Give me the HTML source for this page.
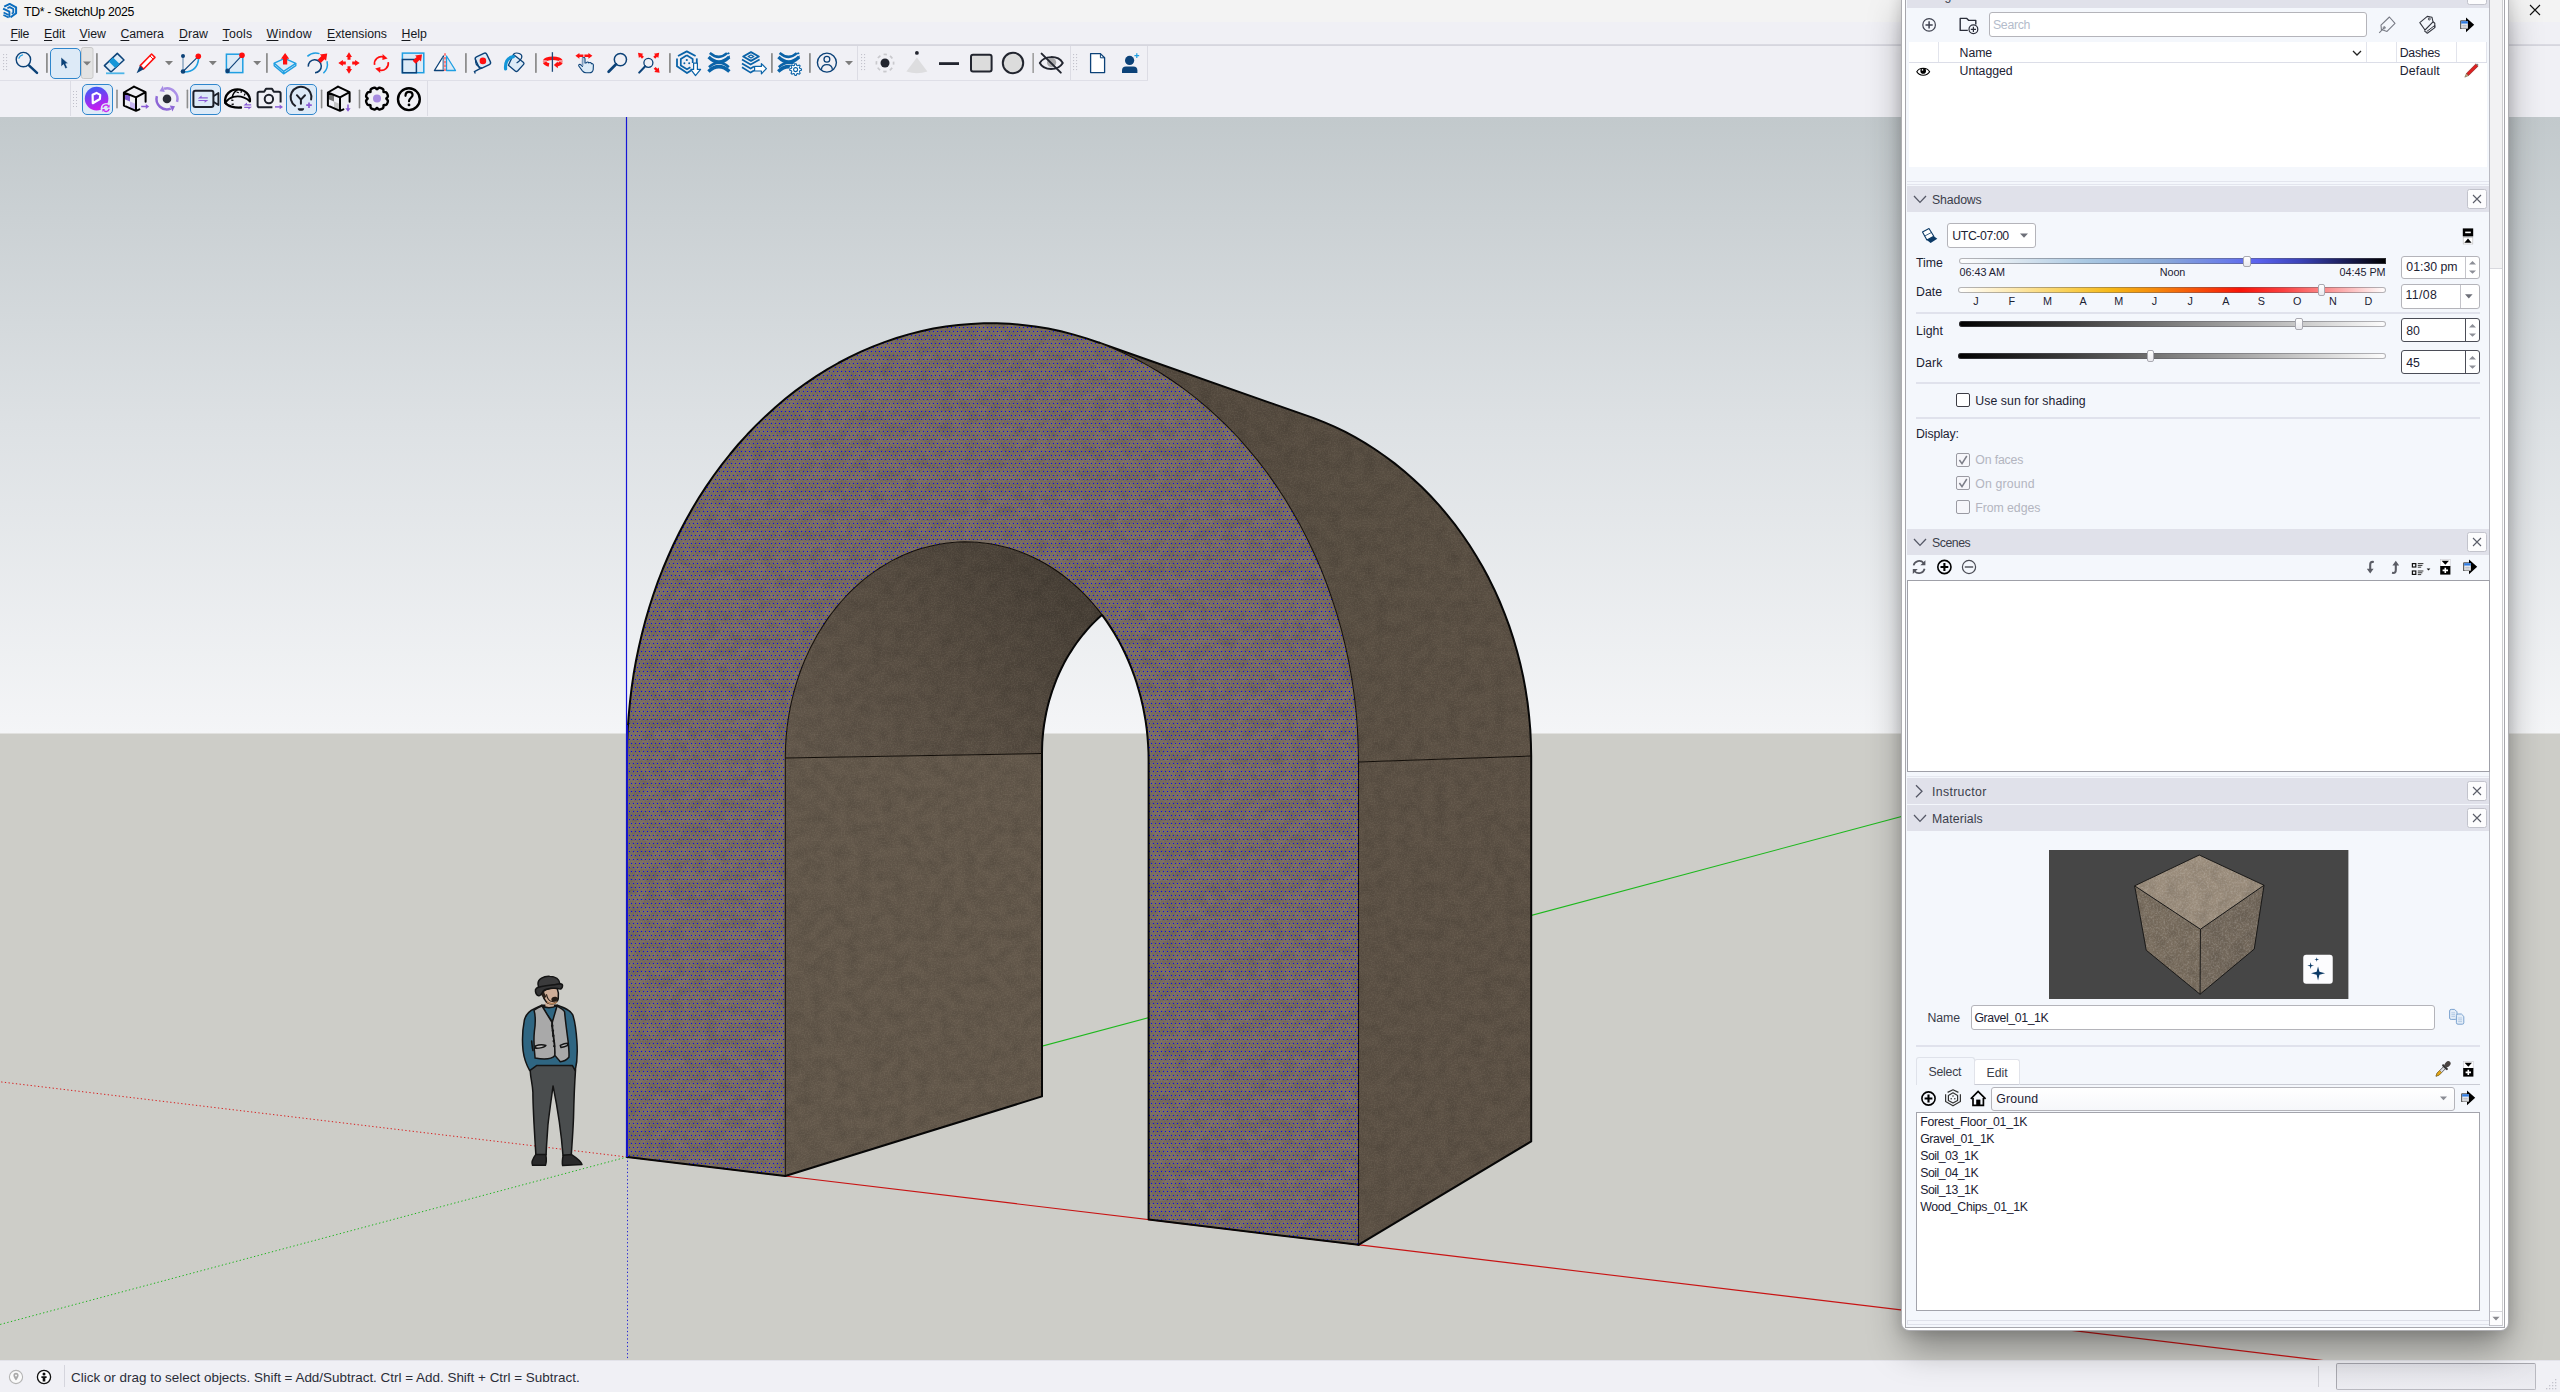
<!DOCTYPE html>
<html lang="en">
<head>
<meta charset="utf-8">
<title>TD* - SketchUp 2025</title>
<style>
*{box-sizing:border-box;margin:0;padding:0}
html,body{width:2560px;height:1392px;overflow:hidden;background:#f0f0f5}
body{font-family:"Liberation Sans",sans-serif;color:#1d2330;position:relative}
.abs,.t,.bx,svg.i{position:absolute}
.t{white-space:pre;line-height:1;display:block}
svg{display:block;overflow:visible}
svg.i{overflow:visible}
#titlebar{position:absolute;left:0;top:0;width:2560px;height:22px;background:#f3f3f3}
#menubar{position:absolute;left:0;top:22px;width:2560px;height:23px;background:#f0f0f5;border-bottom:1px solid #dadae2}
#tools{position:absolute;left:0;top:45px;width:2560px;height:72px;background:#f0f0f5}
#viewport{position:absolute;left:0;top:117px;width:2560px;height:1243px}
#status{position:absolute;left:0;top:1360px;width:2560px;height:32px;background:#f0f0f5}
.sep{position:absolute;width:2px;background:#8e8e8e;border-radius:1px}
.selbtn{position:absolute;background:#ddeaf7;border:1px solid #2f86cc;border-radius:5px}
.tbline{position:absolute;background:#dcdce4}
.grip{position:absolute;width:5px;height:17px;background-image:radial-gradient(circle,#bdbdc8 0.6px,transparent 0.8px);background-size:3px 3px}
/* panel */
#panel{position:absolute;left:1901px;top:-12px;width:608px;height:1343px;background:#fff;border:1px solid rgba(60,60,70,.42);border-radius:8px;box-shadow:0 20px 36px -4px rgba(0,0,0,.38),0 1px 14px 0 rgba(0,0,0,.13)}
#pin{position:absolute;left:1905px;top:-2px;width:600px;height:1330px;border:1px solid #a6a6ac;background:#f4f7fc}
.hdr{position:absolute;left:1907px;width:582px;background:#e0e1ea}
.hdr .cl{position:absolute;right:2px;top:3px;width:20px;height:20px;background:#fcfcfd;border:1px solid #c2c3cc;border-radius:2.5px}
.hl{position:absolute;height:2px;background:#e0e2ec}
.inp{position:absolute;background:#fff;border:1px solid #b4b4ba;border-radius:3px}
.cb{position:absolute;width:14px;height:14px;border:1px solid #3c3c44;border-radius:2px;background:#fff}
.cb.d{border-color:#9a9aa2;background:#f6f6fa}
</style>
</head>
<body>
<div id="titlebar">
<svg class="i" style="left:0px;top:0px" width="20" height="22" viewBox="0 0 20 22" ><g fill="none" stroke="#0b6dbe" stroke-width="2" stroke-linejoin="round" stroke-linecap="butt">
<path d="M4.2,6.6 L9.7,3.9 L16.1,7.3 L16.1,13.2 L10.6,17.3"/>
<path d="M7.4,8.2 L9.7,7.1 L13.3,9 L13.3,12.6 L11.8,13.7" stroke-width="1.8"/>
<path d="M3.1,8.6 L9.4,11.7 L9.4,17.6" stroke-width="1.9"/>
<path d="M3.6,12.4 L8.6,14.9 M3.4,15 L8.6,17.5" stroke-width="1.7"/>
</g></svg>
<span class="t" style="left:24px;top:5.64px;font-size:12.3px;color:#000;letter-spacing:-0.33px;">TD* - SketchUp 2025</span>
<svg class="i" style="left:2528px;top:3px" width="14" height="14" viewBox="0 0 14 14" ><path d="M2,2 L12,12 M12,2 L2,12" stroke="#111" stroke-width="1.1" fill="none"/></svg>
</div>
<div id="menubar">
<span class="t" style="left:10.5px;top:6.44px;font-size:12.3px;color:#16181d;letter-spacing:-0.329px;text-underline-offset:1.5px;text-decoration-thickness:1px;text-decoration-color:#95959c;"><u>F</u>ile</span>
<span class="t" style="left:44px;top:6.44px;font-size:12.3px;color:#16181d;letter-spacing:-0.048px;text-underline-offset:1.5px;text-decoration-thickness:1px;text-decoration-color:#95959c;"><u>E</u>dit</span>
<span class="t" style="left:79.5px;top:6.44px;font-size:12.3px;color:#16181d;letter-spacing:0.014px;text-underline-offset:1.5px;text-decoration-thickness:1px;text-decoration-color:#95959c;"><u>V</u>iew</span>
<span class="t" style="left:120.5px;top:6.44px;font-size:12.3px;color:#16181d;letter-spacing:-0.084px;text-underline-offset:1.5px;text-decoration-thickness:1px;text-decoration-color:#95959c;"><u>C</u>amera</span>
<span class="t" style="left:179px;top:6.44px;font-size:12.3px;color:#16181d;letter-spacing:0.073px;text-underline-offset:1.5px;text-decoration-thickness:1px;text-decoration-color:#95959c;"><u>D</u>raw</span>
<span class="t" style="left:222.5px;top:6.44px;font-size:12.3px;color:#16181d;letter-spacing:0.256px;text-underline-offset:1.5px;text-decoration-thickness:1px;text-decoration-color:#95959c;"><u>T</u>ools</span>
<span class="t" style="left:266.5px;top:6.44px;font-size:12.3px;color:#16181d;letter-spacing:0.291px;text-underline-offset:1.5px;text-decoration-thickness:1px;text-decoration-color:#95959c;"><u>W</u>indow</span>
<span class="t" style="left:327px;top:6.44px;font-size:12.3px;color:#16181d;letter-spacing:-0.017px;text-underline-offset:1.5px;text-decoration-thickness:1px;text-decoration-color:#95959c;"><u>E</u>xtensions</span>
<span class="t" style="left:401.5px;top:6.44px;font-size:12.3px;color:#16181d;letter-spacing:0.050px;text-underline-offset:1.5px;text-decoration-thickness:1px;text-decoration-color:#95959c;"><u>H</u>elp</span>
</div>
<div id="tools"><svg width="2560" height="72" viewBox="0 45 2560 72" style="position:absolute;left:0;top:0"><path d="M0,45.5 H2560" stroke="#d6d6de"/><path d="M0,80.5 H1148" stroke="#dfdfe7"/><rect x="3" y="54" width="1.1" height="1.1" fill="#c3c3cc"/><rect x="6" y="54" width="1.1" height="1.1" fill="#c3c3cc"/><rect x="3" y="57" width="1.1" height="1.1" fill="#c3c3cc"/><rect x="6" y="57" width="1.1" height="1.1" fill="#c3c3cc"/><rect x="3" y="60" width="1.1" height="1.1" fill="#c3c3cc"/><rect x="6" y="60" width="1.1" height="1.1" fill="#c3c3cc"/><rect x="3" y="63" width="1.1" height="1.1" fill="#c3c3cc"/><rect x="6" y="63" width="1.1" height="1.1" fill="#c3c3cc"/><rect x="3" y="66" width="1.1" height="1.1" fill="#c3c3cc"/><rect x="6" y="66" width="1.1" height="1.1" fill="#c3c3cc"/><rect x="3" y="69" width="1.1" height="1.1" fill="#c3c3cc"/><rect x="6" y="69" width="1.1" height="1.1" fill="#c3c3cc"/>
<circle cx="23.4" cy="59.6" r="7.2" fill="none" stroke="#0c4278" stroke-width="1.4"/><path d="M29.2,65.6 L37,72.8" stroke="#0c4278" stroke-width="2.5" stroke-linecap="round"/><path d="M18.9,58.3 A5,5 0 0 1 22.6,54.9" fill="none" stroke="#1f9fe2" stroke-width="1.2" stroke-linecap="round"/>
<rect x="46" y="53" width="1.8" height="20" rx=".8" fill="#8e8e8e"/>
<rect x="50.5" y="48.5" width="30" height="30" rx="4.5" fill="#ddeaf7" stroke="#2f86cc"/>
<path d="M61,57 L61,66.8 L63.5,64.6 L65.3,68.8 L67.5,67.8 L65.7,63.8 L68.4,63.6Z" fill="#0c4278" stroke="#eef4fb" stroke-width=".6"/>
<rect x="81.5" y="47.5" width="11.5" height="31" rx="2" fill="#e3e3e3" stroke="#c9c9c9"/>
<path d="M83,61.4 h8 l-4,4.2Z" fill="#7d7d7d"/>
<rect x="96" y="53" width="1.8" height="20" rx=".8" fill="#8e8e8e"/>
<path d="M117.3,53.4 L124,60 L111,72 L104.4,65.6Z" fill="#dcebf7" stroke="#0c4278" stroke-width="1.5" stroke-linejoin="round"/><path d="M113,57.4 L119.7,64 L115.3,68 L108.7,61.6Z" fill="#1496d8"/><path d="M106,73.3 H124.4" stroke="#4db5e8" stroke-width="1.8"/>
<path d="M151.6,54 L155,57.4 L143.6,69 L140.2,65.6Z" fill="#fff" stroke="#ff0f0f" stroke-width="1.5" stroke-linejoin="round"/><path d="M149.8,55.8 L153.2,59.2" stroke="#ff0f0f" stroke-width="1"/><path d="M140,65.4 L143.8,69.2 L136.6,73.2Z" fill="#0c4278"/>
<path d="M165,61 h8 l-4,4.2Z" fill="#7d7d7d"/>
<path d="M183,56 V71.5" stroke="#5a82a8" stroke-width="1"/><path d="M183,71.5 L198.3,56.3" stroke="#0c4278" stroke-width="1.1"/><path d="M184.6,72 Q197.5,71.5 198.6,58.5" fill="none" stroke="#1f9fe2" stroke-width="1.6"/><circle cx="183" cy="55.9" r="2" fill="#0c4278"/><circle cx="183" cy="71.5" r="2.3" fill="#0c4278"/><circle cx="198.3" cy="56.3" r="2.8" fill="#ff0f0f"/>
<path d="M208.8,61 h8 l-4,4.2Z" fill="#7d7d7d"/>
<rect x="226.4" y="54.2" width="16.4" height="18.4" fill="#dcebf7" stroke="#1f9fe2" stroke-width="1.5"/><path d="M227.6,70.9 L242,55.3" stroke="#0c4278" stroke-width="1.1"/><circle cx="227.6" cy="70.9" r="2.3" fill="#0c4278"/><circle cx="242" cy="55.3" r="2.8" fill="#ff0f0f"/>
<path d="M253.2,61 h8 l-4,4.2Z" fill="#7d7d7d"/>
<rect x="266" y="53" width="1.8" height="20" rx=".8" fill="#8e8e8e"/>
<path d="M274.2,63.2 L284.7,58.3 L295.8,63.4 L283.6,71.4Z" fill="#dcebf7" stroke="#1f9fe2" stroke-width="1.4" stroke-linejoin="round"/><path d="M274.2,63.2 V65.6 L283.6,73.8 L295.8,65.7 V63.4 M283.6,71.4 V73.8" fill="none" stroke="#1f9fe2" stroke-width="1.4" stroke-linejoin="round"/>
<path d="M285.1,53.0 L289.2,58.8 L287.2,58.8 L287.2,64.4 L283.0,64.4 L283.0,58.8 L281.0,58.8Z" fill="#ff0f0f"/>
<path d="M307.4,56.4 A12.2,12.2 0 0 1 319.5,53.6" fill="none" stroke="#1f9fe2" stroke-width="1.5"/><path d="M327,61.2 A12.4,12.4 0 0 1 323.4,73.2" fill="none" stroke="#1f9fe2" stroke-width="1.5"/><path d="M308.3,66.6 A6.5,6.5 0 1 1 315,72.7" fill="none" stroke="#0c4278" stroke-width="1.5"/>
<path d="M327.2,53.4 L326.1,60.8 L324.5,59.2 L320.8,62.9 L317.7,59.8 L321.4,56.1 L319.8,54.5Z" fill="#ff0f0f"/>
<path d="M349.0,52.3 L352.0,56.9 L350.5,56.9 L350.5,59.8 L347.5,59.8 L347.5,56.9 L346.0,56.9Z" fill="#ff0f0f"/>
<path d="M349.0,73.7 L346.0,69.1 L347.5,69.1 L347.5,66.2 L350.5,66.2 L350.5,69.1 L352.0,69.1Z" fill="#ff0f0f"/>
<path d="M338.3,63.0 L342.9,60.0 L342.9,61.5 L345.8,61.5 L345.8,64.5 L342.9,64.5 L342.9,66.0Z" fill="#ff0f0f"/>
<path d="M359.7,63.0 L355.1,66.0 L355.1,64.5 L352.2,64.5 L352.2,61.5 L355.1,61.5 L355.1,60.0Z" fill="#ff0f0f"/>
<path d="M374.6,64.8 A6.9,6.9 0 0 1 383.5,57" fill="none" stroke="#ff0f0f" stroke-width="1.7"/><path d="M382.6,53.9 L387.6,58.4 L382.4,60Z" fill="#ff0f0f"/><path d="M388.2,62.2 A6.9,6.9 0 0 1 379.3,70" fill="none" stroke="#ff0f0f" stroke-width="1.7"/><path d="M380.2,73.1 L375.2,68.6 L380.4,67Z" fill="#ff0f0f"/>
<rect x="402.4" y="53.1" width="21.4" height="19.6" fill="#dcebf7" stroke="#1f9fe2" stroke-width="1.5"/><path d="M402.4,59.4 H416.4 V72.7 H402.4Z" fill="none" stroke="#0c4278" stroke-width="1.5"/>
<path d="M422.0,54.5 L421.0,61.4 L419.5,59.9 L415.7,63.8 L412.7,60.8 L416.6,57.0 L415.1,55.5Z" fill="#ff0f0f"/>
<path d="M434.4,70.5 H443.4 V56Z" fill="#fff" stroke="#0c4278" stroke-width="1.3" stroke-linejoin="round"/><path d="M446.5,56 V70.5 H455.5Z" fill="#dcebf7" stroke="#1f9fe2" stroke-width="1.3" stroke-linejoin="round"/><path d="M443.3,57 V70" stroke="#7f9dbd" stroke-width="1.2"/><path d="M445,53.2 V71.8" stroke="#ff6b6b" stroke-width="1.7" stroke-dasharray="2.6 1.2"/>
<rect x="465" y="53" width="1.8" height="20" rx=".8" fill="#8e8e8e"/>
<g transform="rotate(-26 482.8 60.8)"><rect x="476.6" y="54.6" width="12.6" height="12.4" rx="2.2" fill="#dcebf7" stroke="#0c4278" stroke-width="1.4"/></g><path d="M475.8,59.5 C475,63 476.5,66 480.6,67.6" fill="none" stroke="#0c4278" stroke-width="1.3"/><circle cx="482.9" cy="60.9" r="3.3" fill="#ff0f0f"/><path d="M482,67.6 L474.4,71.6 L475.3,73.6" fill="none" stroke="#0c4278" stroke-width="1.3"/>
<path d="M513.4,54.4 L523.6,62.6 Q524.4,63.6 523.4,64.6 L517.6,71 Q516.4,72 515.2,71 L508.4,65.2Z" fill="#dcebf7" stroke="#0c4278" stroke-width="1.3" stroke-linejoin="round"/><path d="M513.6,53.8 C517,52 522.5,53.6 521.8,57.2 C521.4,59.4 518.8,61.6 516.6,63" fill="none" stroke="#0c4278" stroke-width="1.2"/><path d="M513.4,56.6 C508,57.6 505,62 505.6,69" fill="none" stroke="#1496d8" stroke-width="3.2" stroke-linecap="round"/>
<rect x="535" y="53" width="1.8" height="20" rx=".8" fill="#8e8e8e"/>
<g fill="none" stroke="#ff0f0f" stroke-width="3.6"><path d="M544.6,61.6 A8.2,3.4 0 0 1 561,61.6"/><path d="M544.6,62.3 A8.2,3.4 0 0 0 549,64.9"/><path d="M561,62.3 A8.2,3.4 0 0 1 557,64.8"/></g><path d="M553.8,64.9 L557.8,61.6 V68.2Z" fill="#ff0f0f"/><path d="M542.4,60.7 H546.8 M558.8,60.7 H563.2" stroke="#f0f0f5" stroke-width=".7"/><path d="M552.4,52.2 V71.8" stroke="#1f4a7a" stroke-width="1.3"/>
<path d="M582.6,57.8 C583.8,57 585,57.6 585,59 L585,63 L586.2,63 C586.4,61.6 588.4,61.6 588.8,63 C589.6,62 591.2,62.4 591.4,63.8 C592.4,63.2 593.4,64 593.4,65.2 L593.2,69.6 C592.8,71.6 591.2,72.8 589.4,72.8 L586,72.8 C584.4,72.8 583.4,72 582.4,70.8 L578.8,66 C578.2,64.8 579.8,63.8 580.8,64.8 L582.4,66.4Z" fill="#dcebf7" stroke="#0c4278" stroke-width="1.1" stroke-linejoin="round"/><path d="M582.6,57.4 V66" stroke="#7f9dbd" stroke-width="1.6"/>
<path d="M575.4,55.8 L579.4,52.9 L579.4,54.5 L583.4,54.5 L583.4,57.1 L579.4,57.1 L579.4,58.7Z" fill="#ff0f0f"/>
<path d="M592.4,55.8 L588.4,58.7 L588.4,57.1 L584.4,57.1 L584.4,54.5 L588.4,54.5 L588.4,52.9Z" fill="#ff0f0f"/>
<circle cx="620.4" cy="59.6" r="6.1" fill="none" stroke="#0c4278" stroke-width="1.5"/><path d="M616,64.2 L608.6,71.8" stroke="#0c4278" stroke-width="2.7" stroke-linecap="round"/>
<circle cx="648.4" cy="62.8" r="4.5" fill="none" stroke="#0c4278" stroke-width="1.3"/><path d="M645.2,66.2 L639.2,72.6" stroke="#0c4278" stroke-width="2.1" stroke-linecap="round"/>
<path d="M638.0,52.8 L643.3,53.7 L642.0,55.0 L643.9,56.8 L642.0,58.7 L640.2,56.8 L638.9,58.1Z" fill="#ff0f0f"/>
<path d="M659.2,52.8 L658.3,58.1 L657.0,56.8 L655.2,58.7 L653.3,56.8 L655.2,55.0 L653.9,53.7Z" fill="#ff0f0f"/>
<path d="M659.6,72.8 L654.3,71.9 L655.6,70.6 L653.7,68.8 L655.6,66.9 L657.4,68.8 L658.7,67.5Z" fill="#ff0f0f"/>
<rect x="669" y="53" width="1.8" height="20" rx=".8" fill="#8e8e8e"/>
<g fill="none" stroke="#0a63a8" stroke-width="1.8" stroke-linejoin="round"><path d="M678,56 L686.8,51.4 L695.6,56"/><path d="M677,58.4 V66.2 L687,73 L691,70.4"/><path d="M696.8,58.4 V63.4"/><path d="M686.8,55.3 L692.7,58.9 V63 M686.8,55.3 L680.8,58.9 V65.5 L687,69.3 L690.4,67.2" stroke-width="1.7"/></g><g fill="#0a63a8"><circle cx="686.8" cy="60" r="1.1"/><circle cx="684.4" cy="63.2" r="1"/><circle cx="689.2" cy="63.2" r="1"/></g><path d="M693.6,63.2 H697.4 V69.4 H700.6 L695.5,75.6 L690.8,69.4 H693.6Z" fill="#fff" stroke="#0a63a8" stroke-width="1.2" stroke-linejoin="round"/>
<g fill="none" stroke="#0a63a8" stroke-linecap="butt"><path d="M709.8,53 Q718.9,60.6 727,53.2" stroke-width="2.5"/><path d="M708.6,57 Q718.9,67 729.2,57" stroke-width="3.3"/><path d="M709,67.2 Q718.9,58 728.8,67.2" stroke-width="2.6"/><path d="M708.4,71.4 Q718.9,61.8 729.4,71.4" stroke-width="3.4"/></g><path d="M726.6,53.4 l1.8,-1.2 l1.6,1 l-1.8,1.3Z M728.2,56.4 l1.6,-1.2 v2.8 l-1.6,1.2Z" fill="#0a63a8"/>
<g fill="none" stroke="#0a63a8" stroke-width="1.9" stroke-linejoin="round"><path d="M743.2,56.5 L751,52.2 L758.8,56.5 L751,60.9Z"/><path d="M748.2,56.5 L751,55 L753.8,56.5 L751,58Z" stroke-width="1.3"/><path d="M742,59.6 L750.6,64.6 L759.6,59.4" stroke-width="1.7"/><path d="M742,63.4 L750.6,68.6 L754,66.6" stroke-width="1.7"/><path d="M742,67.2 L750.6,72.6 L754,70.6" stroke-width="1.7"/></g><path d="M754.6,66.4 H761.4 V63.6 L766.4,68.7 L761.4,73.8 V71 H754.6Z" fill="#fff" stroke="#0a63a8" stroke-width="1.2" stroke-linejoin="round"/>
<rect x="771" y="53" width="1.8" height="20" rx=".8" fill="#8e8e8e"/>
<g fill="none" stroke="#0a63a8" stroke-linecap="butt"><path d="M779.5999999999999,53 Q788.6999999999999,60.6 796.8,53.2" stroke-width="2.5"/><path d="M778.4,57 Q788.6999999999999,67 799.0,57" stroke-width="3.3"/><path d="M778.8,67.2 Q788.6999999999999,58 798.5999999999999,67.2" stroke-width="2.6"/><path d="M778.1999999999999,71.4 Q788.6999999999999,61.8 799.1999999999999,71.4" stroke-width="3.4"/></g><path d="M796.4,53.4 l1.8,-1.2 l1.6,1 l-1.8,1.3Z M798.0,56.4 l1.6,-1.2 v2.8 l-1.6,1.2Z" fill="#0a63a8"/>
<circle cx="795.6" cy="69.6" r="6.4" fill="#f0f0f5"/><path d="M801.47,69.02 L801.47,70.18 L799.71,70.85 L799.39,71.63 L800.16,73.34 L799.34,74.16 L797.63,73.39 L796.85,73.71 L796.18,75.47 L795.02,75.47 L794.35,73.71 L793.57,73.39 L791.86,74.16 L791.04,73.34 L791.81,71.63 L791.49,70.85 L789.73,70.18 L789.73,69.02 L791.49,68.35 L791.81,67.57 L791.04,65.86 L791.86,65.04 L793.57,65.81 L794.35,65.49 L795.02,63.73 L796.18,63.73 L796.85,65.49 L797.63,65.81 L799.34,65.04 L800.16,65.86 L799.39,67.57 L799.71,68.35Z" fill="#fff" stroke="#0a63a8" stroke-width="1.1" stroke-linejoin="round"/><circle cx="795.6" cy="69.6" r="2" fill="#fff" stroke="#0a63a8" stroke-width="1.1"/>
<rect x="809" y="53" width="1.8" height="20" rx=".8" fill="#8e8e8e"/>
<circle cx="826.9" cy="62.6" r="9.5" fill="none" stroke="#0c4278" stroke-width="1.4"/><circle cx="826.9" cy="59.2" r="2.9" fill="none" stroke="#0c4278" stroke-width="1.3"/><path d="M821.4,69.8 C821.6,66 823.8,64.6 826.9,64.6 C830,64.6 832.2,66 832.4,69.8" fill="none" stroke="#0c4278" stroke-width="1.3"/>
<path d="M845,61 h8 l-4,4.2Z" fill="#7d7d7d"/>
<path d="M857.5,46 V80" stroke="#dcdce4" stroke-width="1"/><path d="M1070.5,46 V80" stroke="#dcdce4"/><path d="M1147.5,46 V80" stroke="#dcdce4"/>
<rect x="861" y="54" width="1.1" height="1.1" fill="#c3c3cc"/><rect x="864" y="54" width="1.1" height="1.1" fill="#c3c3cc"/><rect x="861" y="57" width="1.1" height="1.1" fill="#c3c3cc"/><rect x="864" y="57" width="1.1" height="1.1" fill="#c3c3cc"/><rect x="861" y="60" width="1.1" height="1.1" fill="#c3c3cc"/><rect x="864" y="60" width="1.1" height="1.1" fill="#c3c3cc"/><rect x="861" y="63" width="1.1" height="1.1" fill="#c3c3cc"/><rect x="864" y="63" width="1.1" height="1.1" fill="#c3c3cc"/><rect x="861" y="66" width="1.1" height="1.1" fill="#c3c3cc"/><rect x="864" y="66" width="1.1" height="1.1" fill="#c3c3cc"/><rect x="861" y="69" width="1.1" height="1.1" fill="#c3c3cc"/><rect x="864" y="69" width="1.1" height="1.1" fill="#c3c3cc"/>
<circle cx="885" cy="63" r="8.6" fill="none" stroke="#c9c9cd" stroke-width="1.7" stroke-dasharray="3.4 3.35" stroke-dashoffset="1.7"/><circle cx="885" cy="63" r="4.5" fill="#22252f"/>
<path d="M916.9,57.4 L906.4,71.4 Q916.9,75 927.4,71.4Z" fill="#dddddf"/><circle cx="916.9" cy="52.9" r="1.9" fill="#22252f"/>
<path d="M939,63.6 H959" stroke="#22252f" stroke-width="2.8"/>
<rect x="971" y="54.8" width="20.6" height="16.8" rx="2" fill="#dcdcdc" stroke="#22252f" stroke-width="2"/>
<circle cx="1013" cy="63" r="10.2" fill="#dcdcdc" stroke="#22252f" stroke-width="2"/>
<rect x="1032.4" y="53" width="1.5" height="20" fill="#9a9a9a"/>
<circle cx="1051.6" cy="62.6" r="4.6" fill="#a9a9ab"/><path d="M1039.8,63 C1044,55.4 1058,54.8 1062.8,63 C1058,71 1044,71 1039.8,63Z" fill="none" stroke="#22252f" stroke-width="1.9" stroke-linejoin="round"/><path d="M1041.6,53.6 L1060.8,72.6" stroke="#22252f" stroke-width="2" stroke-linecap="round"/>
<rect x="1073" y="54" width="1.1" height="1.1" fill="#c3c3cc"/><rect x="1076" y="54" width="1.1" height="1.1" fill="#c3c3cc"/><rect x="1073" y="57" width="1.1" height="1.1" fill="#c3c3cc"/><rect x="1076" y="57" width="1.1" height="1.1" fill="#c3c3cc"/><rect x="1073" y="60" width="1.1" height="1.1" fill="#c3c3cc"/><rect x="1076" y="60" width="1.1" height="1.1" fill="#c3c3cc"/><rect x="1073" y="63" width="1.1" height="1.1" fill="#c3c3cc"/><rect x="1076" y="63" width="1.1" height="1.1" fill="#c3c3cc"/><rect x="1073" y="66" width="1.1" height="1.1" fill="#c3c3cc"/><rect x="1076" y="66" width="1.1" height="1.1" fill="#c3c3cc"/><rect x="1073" y="69" width="1.1" height="1.1" fill="#c3c3cc"/><rect x="1076" y="69" width="1.1" height="1.1" fill="#c3c3cc"/>
<path d="M1090.6,53.6 H1100.4 L1104.6,57.8 V72.6 H1090.6Z" fill="#fff" stroke="#0c4278" stroke-width="1.3" stroke-linejoin="round"/><path d="M1100.4,53.6 V57.8 H1104.6" fill="none" stroke="#0c4278" stroke-width="1"/>
<circle cx="1129.6" cy="60.4" r="4.6" fill="#0c4278"/><path d="M1122,73 V70.4 Q1122,66.4 1126,66.4 H1133.4 Q1137.4,66.4 1137.4,70.4 V73Z" fill="#0c4278"/><path d="M1136.8,53.2 V58 M1134.4,55.6 H1139.2" stroke="#1f9fe2" stroke-width="1.2"/>
<defs><linearGradient id="dg" x1="0" y1="0" x2="0.25" y2="1"><stop offset="0" stop-color="#2f62f6"/><stop offset=".5" stop-color="#7a3df2"/><stop offset="1" stop-color="#c51cf0"/></linearGradient><linearGradient id="pg2" gradientUnits="userSpaceOnUse" x1="178" y1="88" x2="156" y2="110"><stop offset="0" stop-color="#b49cec"/><stop offset="1" stop-color="#8258d0"/></linearGradient><linearGradient id="pg" x1="0" y1="0" x2="1" y2="1"><stop offset="0" stop-color="#b9a2ee"/><stop offset="1" stop-color="#8258d0"/></linearGradient></defs>
<path d="M70.5,81 V116" stroke="#dcdce4"/><path d="M427.5,81 V116" stroke="#dcdce4"/>
<rect x="73" y="91" width="1" height="1" fill="#c0c0ca"/><rect x="76" y="91" width="1" height="1" fill="#c0c0ca"/><rect x="73" y="94" width="1" height="1" fill="#c0c0ca"/><rect x="76" y="94" width="1" height="1" fill="#c0c0ca"/><rect x="73" y="97" width="1" height="1" fill="#c0c0ca"/><rect x="76" y="97" width="1" height="1" fill="#c0c0ca"/><rect x="73" y="100" width="1" height="1" fill="#c0c0ca"/><rect x="76" y="100" width="1" height="1" fill="#c0c0ca"/><rect x="73" y="103" width="1" height="1" fill="#c0c0ca"/><rect x="76" y="103" width="1" height="1" fill="#c0c0ca"/><rect x="73" y="106" width="1" height="1" fill="#c0c0ca"/><rect x="76" y="106" width="1" height="1" fill="#c0c0ca"/>
<rect x="82.5" y="84.5" width="30" height="30" rx="4.5" fill="#ddeaf7" stroke="#2f86cc"/>
<circle cx="96.6" cy="98.6" r="11.8" fill="url(#dg)"/><path d="M92.6,94.8 L96.5,92.9 L100.2,94.9 L99.9,99 L92.8,103.2Z" fill="none" stroke="#fff" stroke-width="2.2" stroke-linejoin="round"/>
<circle cx="106" cy="108.2" r="5.3" fill="#ddeaf7"/><g fill="none" stroke="#c62af2" stroke-width="1.4"><path d="M102.9,107.6 A3.2,3.2 0 0 1 108.4,106"/><path d="M109.1,108.8 A3.2,3.2 0 0 1 103.6,110.4"/></g><path d="M109.6,104.4 V107.4 H106.8Z M102.4,112 V109 H105.2Z" fill="#c62af2"/>
<rect x="116.2" y="89.4" width="1.6" height="19.19999999999999" rx=".8" fill="#8e8e8e"/>
<path d="M123.9,92.5 L130,95 V101.6 L123.9,99.1Z" fill="#7d5ccf"/><path d="M130,101.6 L136,104.1 V110.8 L130,108.2Z" fill="#c9b8f2"/><g fill="none" stroke="#000" stroke-width="2" stroke-linejoin="round" stroke-linecap="round"><path d="M134,86.6 L123.9,92.5 V105.6 L136,110.8 V97.4 L123.9,92.5 M136,97.4 L145.6,92.2 L134,86.6 M145.6,92.2 V101.8 M136,110.8 L139.4,109.4"/></g><path d="M141.2,106.5 H146.7" stroke="#8a5cd6" stroke-width="1.5"/><path d="M149.2,106.5 L145.79999999999998,104.1 V108.9Z" fill="#8a5cd6"/>
<g fill="none" stroke="url(#pg2)" stroke-width="2.5"><path d="M177.04,101.97 A10.5,10.5 0 0 0 164.11,88.81"/><path d="M156.86,96.18 A10.5,10.5 0 0 0 170.76,108.70"/></g><path d="M162.74,85.78 L159.50,91.13 L164.78,92.05Z" fill="#a58be4"/><path d="M172.39,111.60 L175.03,106.13 L169.81,105.53Z" fill="#8d67d6"/><circle cx="167" cy="98.9" r="4.3" fill="#2a2d38"/>
<rect x="186.6" y="89.4" width="1.6" height="19.19999999999999" rx=".8" fill="#8e8e8e"/>
<rect x="190.5" y="84.5" width="30" height="30" rx="4.5" fill="#ddeaf7" stroke="#2f86cc"/>
<rect x="193.4" y="90.8" width="20" height="16.2" rx="2" fill="none" stroke="#1d2029" stroke-width="2"/><path d="M213.8,96 L218.4,93 V105 L213.8,102" fill="none" stroke="#1d2029" stroke-width="1.9" stroke-linejoin="round"/>
<path d="M197.8,98.5 L201.6,95.6 V97.3 H207.8 V98.5Z M208.4,99.9 L204.6,102.8 V101.1 H198.4 V99.9Z" fill="#8a5cd6"/>
<path d="M225.2,102.6 C224.2,95 230.2,89.3 237.4,89.3 C244.6,89.3 250.6,94.6 249.9,101.4" fill="none" stroke="#000" stroke-width="2.3" stroke-linecap="round"/><path d="M225.2,102.6 C227.4,106.2 234.4,108 241,107.5" fill="none" stroke="#000" stroke-width="2.3" stroke-linecap="round"/><path d="M225.4,102.4 C227.6,99.6 230.4,97.6 233.6,96.8 C239,95.6 245.4,97.4 249.8,101.2" fill="none" stroke="#000" stroke-width="1.8"/><path d="M237.6,89.6 C234.6,91.4 232.8,94 232.4,97" fill="none" stroke="#000" stroke-width="1.5"/><path d="M241.4,90.6 L241,92.8 M245.2,93.4 L244.2,95.4 M236.6,92 L238.8,92.8 M231.2,100.2 L233.4,100.4 M231.6,104.4 L233.8,104.2" stroke="#000" stroke-width="1.2"/>
<path d="M243.4,105.4 L247,102.6 V104.3 H251.2 V105.4Z M252,106.8 L248.4,109.6 V107.9 H244.2 V106.8Z" fill="#8a5cd6"/>
<path d="M272.4,107.2 H259.4 Q257.6,107.2 257.6,105.4 V93.6 Q257.6,91.8 259.4,91.8 H264.2 L266,88.7 H272 L273.8,91.8 H278.8 Q280.6,91.8 280.6,93.6 V102.4" fill="none" stroke="#1d2029" stroke-width="2" stroke-linejoin="round"/><circle cx="268.9" cy="99" r="4.2" fill="none" stroke="#1d2029" stroke-width="2"/>
<path d="M275,106.9 H280.5" stroke="#8a5cd6" stroke-width="1.5"/><path d="M283,106.9 L279.6,104.5 V109.30000000000001Z" fill="#8a5cd6"/>
<rect x="286.5" y="84.5" width="30" height="30" rx="4.5" fill="#ddeaf7" stroke="#2f86cc"/>
<path d="M295.2,105.8 A10.4,10.4 0 1 1 311.1,99.6" fill="none" stroke="#1d2029" stroke-width="2" stroke-linecap="round"/><path d="M296.9,95.2 L300.9,99.6 L305,95.2 M300.9,99.6 V103.8" fill="none" stroke="#1d2029" stroke-width="2" stroke-linecap="round" stroke-linejoin="round"/><path d="M297.7,108.2 H304.1 A3.2,2.6 0 0 1 297.7,108.2Z" fill="#1d2029"/><path d="M309,102.4 V108 M306.2,105.2 H311.8" stroke="#8a5cd6" stroke-width="1.7"/>
<rect x="320.8" y="89.4" width="1.6" height="19.19999999999999" rx=".8" fill="#8e8e8e"/>
<path d="M327.9,92.5 L334,95 V101.6 L327.9,99.1Z" fill="#6f6f6f"/><path d="M334,101.6 L340,104.1 V110.8 L334,108.2Z" fill="#c6c6c6"/><g fill="none" stroke="#000" stroke-width="2" stroke-linejoin="round" stroke-linecap="round"><path d="M338,86.6 L327.9,92.5 V105.6 L340,110.8 V97.4 L327.9,92.5 M340,97.4 L349.6,92.2 L338,86.6 M349.6,92.2 V101.8 M340,110.8 L343.4,109.4"/></g><path d="M348,104.6 V109.2" stroke="#8a5cd6" stroke-width="1.5"/><path d="M348,111.8 L345.4,108.2 H350.6Z" fill="#8a5cd6"/>
<rect x="358.7" y="89.4" width="1.6" height="19.19999999999999" rx=".8" fill="#8e8e8e"/>
<path d="M386.35,98.60 L386.52,98.97 L386.94,99.38 L387.40,99.83 L387.72,100.30 L387.88,100.76 L387.89,101.21 L387.81,101.65 L387.70,102.08 L387.55,102.49 L387.39,102.91 L387.22,103.31 L387.02,103.71 L386.80,104.09 L386.55,104.45 L386.22,104.76 L385.78,104.98 L385.22,105.08 L384.58,105.07 L384.00,105.07 L383.61,105.21 L383.47,105.60 L383.47,106.18 L383.48,106.82 L383.38,107.38 L383.16,107.82 L382.85,108.15 L382.49,108.40 L382.11,108.62 L381.71,108.82 L381.31,108.99 L380.89,109.15 L380.48,109.30 L380.05,109.41 L379.61,109.49 L379.16,109.48 L378.70,109.32 L378.23,109.00 L377.78,108.54 L377.37,108.12 L377.00,107.95 L376.63,108.12 L376.22,108.54 L375.77,109.00 L375.30,109.32 L374.84,109.48 L374.39,109.49 L373.95,109.41 L373.52,109.30 L373.11,109.15 L372.69,108.99 L372.29,108.82 L371.89,108.62 L371.51,108.40 L371.15,108.15 L370.84,107.82 L370.62,107.38 L370.52,106.82 L370.53,106.18 L370.53,105.60 L370.39,105.21 L370.00,105.07 L369.42,105.07 L368.78,105.08 L368.22,104.98 L367.78,104.76 L367.45,104.45 L367.20,104.09 L366.98,103.71 L366.78,103.31 L366.61,102.91 L366.45,102.49 L366.30,102.08 L366.19,101.65 L366.11,101.21 L366.12,100.76 L366.28,100.30 L366.60,99.83 L367.06,99.38 L367.48,98.97 L367.65,98.60 L367.48,98.23 L367.06,97.82 L366.60,97.37 L366.28,96.90 L366.12,96.44 L366.11,95.99 L366.19,95.55 L366.30,95.12 L366.45,94.71 L366.61,94.29 L366.78,93.89 L366.98,93.49 L367.20,93.11 L367.45,92.75 L367.78,92.44 L368.22,92.22 L368.78,92.12 L369.42,92.13 L370.00,92.13 L370.39,91.99 L370.53,91.60 L370.53,91.02 L370.52,90.38 L370.62,89.82 L370.84,89.38 L371.15,89.05 L371.51,88.80 L371.89,88.58 L372.29,88.38 L372.69,88.21 L373.11,88.05 L373.52,87.90 L373.95,87.79 L374.39,87.71 L374.84,87.72 L375.30,87.88 L375.77,88.20 L376.22,88.66 L376.63,89.08 L377.00,89.25 L377.37,89.08 L377.78,88.66 L378.23,88.20 L378.70,87.88 L379.16,87.72 L379.61,87.71 L380.05,87.79 L380.48,87.90 L380.89,88.05 L381.31,88.21 L381.71,88.38 L382.11,88.58 L382.49,88.80 L382.85,89.05 L383.16,89.38 L383.38,89.82 L383.48,90.38 L383.47,91.02 L383.47,91.60 L383.61,91.99 L384.00,92.13 L384.58,92.13 L385.22,92.12 L385.78,92.22 L386.22,92.44 L386.55,92.75 L386.80,93.11 L387.02,93.49 L387.22,93.89 L387.39,94.29 L387.55,94.71 L387.70,95.12 L387.81,95.55 L387.89,95.99 L387.88,96.44 L387.72,96.90 L387.40,97.37 L386.94,97.82 L386.52,98.23Z" fill="none" stroke="#000" stroke-width="2.4" stroke-linejoin="round"/><circle cx="377" cy="98.6" r="4" fill="#a78be0"/>
<circle cx="408.9" cy="99.2" r="10.9" fill="none" stroke="#000" stroke-width="2.4"/><path d="M405.5,95.8 C405.5,93 407,91.8 409,91.8 C411.2,91.8 412.6,93.2 412.6,95 C412.6,97.6 409,98 409,101.2" fill="none" stroke="#000" stroke-width="2.2" stroke-linecap="round"/><circle cx="409" cy="104.9" r="1.4" fill="#000"/></svg></div>
<svg id="viewport" width="2560" height="1243" viewBox="0 117 2560 1243">
<defs>
<linearGradient id="sky" gradientUnits="userSpaceOnUse" x1="0" y1="117" x2="0" y2="733"><stop offset="0" stop-color="#c2c9cc"/><stop offset=".5" stop-color="#dde1e4"/><stop offset="1" stop-color="#f4f5f7"/></linearGradient>
<pattern id="dots" width="4" height="8" patternUnits="userSpaceOnUse"><rect x="3" y="7" width="1" height="1" fill="#0000ff"/><rect x="1" y="3" width="1" height="1" fill="#0000ff"/></pattern>
<filter id="grain" x="0" y="0" width="100%" height="100%" color-interpolation-filters="sRGB">
<feTurbulence type="fractalNoise" baseFrequency="0.085" numOctaves="2" seed="11" result="n1"/>
<feColorMatrix in="n1" type="matrix" values="0 0 0 0 0  0 0 0 0 0  0 0 0 0 0  0.2 0 0 0 -0.065" result="d1"/>
<feTurbulence type="fractalNoise" baseFrequency="0.7" numOctaves="1" seed="5" result="n2"/>
<feColorMatrix in="n2" type="matrix" values="0 0 0 0 1  0 0 0 0 .95  0 0 0 0 .85  0.2 0 0 0 -0.08" result="d2"/>
<feMerge result="m"><feMergeNode in="d1"/><feMergeNode in="d2"/></feMerge>
<feComposite in="m" in2="SourceAlpha" operator="in" result="mc"/>
<feMerge><feMergeNode in="SourceGraphic"/><feMergeNode in="mc"/></feMerge>
</filter>
<linearGradient id="ceil" gradientUnits="userSpaceOnUse" x1="800" y1="760" x2="1050" y2="560"><stop offset="0" stop-color="#61564a"/><stop offset=".55" stop-color="#554b40"/><stop offset="1" stop-color="#463e35"/></linearGradient>
<linearGradient id="topg" gradientUnits="userSpaceOnUse" x1="1150" y1="360" x2="1500" y2="760"><stop offset="0" stop-color="#52483d"/><stop offset=".5" stop-color="#574d41"/><stop offset="1" stop-color="#5b5044"/></linearGradient>
</defs>
<rect x="0" y="117" width="2560" height="617" fill="url(#sky)"/>
<rect x="0" y="733.5" width="2560" height="627" fill="#cdcdc8"/>
<line x1="627" y1="1157" x2="0" y2="1081.8" stroke="#d81e1e" stroke-width="1" stroke-dasharray="1.3 2.4"/>
<line x1="627" y1="1157" x2="2560" y2="1389.0" stroke="#c81414" stroke-width="1.1"/>
<line x1="627" y1="1157" x2="0" y2="1324.5" stroke="#18b418" stroke-width="1" stroke-dasharray="1.3 2.4"/>
<line x1="627" y1="1157" x2="2212" y2="733.6" stroke="#1db81d" stroke-width="1.1"/>
<line x1="626.5" y1="117" x2="626.5" y2="1157" stroke="#1616d6" stroke-width="1.2"/>
<line x1="627.5" y1="1157" x2="627.5" y2="1360" stroke="#2222d8" stroke-width="1" stroke-dasharray="1.3 2.4"/>
<g id="figure" stroke="#141414" stroke-width="1.5" stroke-linejoin="round" stroke-linecap="round">
<g transform="translate(480,960) scale(0.16529)" style="vector-effect:non-scaling-stroke">
<path vector-effect="non-scaling-stroke" d="M305,640 C330,622 450,630 565,638 L578,665 C572,750 568,850 566,950 C562,1050 556,1120 552,1182 L502,1182 C492,1050 470,900 442,762 C430,850 416,950 411,1000 C406,1080 401,1130 400,1178 L338,1178 C330,1050 320,900 320,800 C316,730 298,690 305,640Z" fill="#4a4d4e"/>
<path vector-effect="non-scaling-stroke" d="M338,1176 L398,1176 C402,1200 402,1225 396,1242 L318,1242 C310,1226 320,1200 338,1176Z" fill="#2a2a2b"/>
<path vector-effect="non-scaling-stroke" d="M503,1182 L552,1176 C582,1196 612,1216 617,1237 L500,1244 C495,1222 499,1202 503,1182Z" fill="#2a2a2b"/>
</g>
<g transform="translate(515,970) scale(0.07184)">
<path vector-effect="non-scaling-stroke" d="M375,490 L270,540 C200,570 150,620 130,700 C100,850 100,1000 112,1120 C125,1230 165,1330 205,1400 L300,1330 L800,1330 L838,1400 C862,1300 872,1150 862,1000 C852,850 832,700 802,620 C772,560 700,530 590,490Z" fill="#2f6682"/>
<path vector-effect="non-scaling-stroke" d="M420,430 L425,520 L470,560 L545,520 L535,440Z" fill="#cfae98" stroke="none"/>
<path vector-effect="non-scaling-stroke" d="M372,492 C420,535 520,535 588,492 L560,640 L520,722 L440,610Z" fill="#2f6682"/>
<path vector-effect="non-scaling-stroke" d="M265,560 C300,530 340,510 375,500 L515,730 C510,800 530,900 545,1000 C555,1080 560,1150 555,1190 C520,1232 420,1252 280,1226 C265,1100 255,1000 270,850 C285,750 290,650 265,560Z" fill="#a9a9a9"/>
<path vector-effect="non-scaling-stroke" d="M585,500 C620,520 660,540 690,580 C700,700 720,850 740,1000 C750,1100 755,1180 750,1215 C720,1250 670,1275 630,1277 C600,1240 575,1210 555,1190 C560,1100 550,1000 535,900 C525,820 515,760 520,725Z" fill="#a9a9a9"/>
<path vector-effect="non-scaling-stroke" d="M285,1056 C330,1040 400,1040 430,1050 C425,1076 330,1092 290,1090Z" fill="#bdbdbd"/>
<path vector-effect="non-scaling-stroke" d="M630,1050 C670,1030 710,1020 730,1020 L735,1050 C700,1066 660,1076 640,1078Z" fill="#bdbdbd"/>
<g fill="#161616" stroke="none"><circle cx="518" cy="775" r="17"/><circle cx="528" cy="845" r="17"/><circle cx="533" cy="915" r="17"/><circle cx="539" cy="990" r="17"/><circle cx="546" cy="1060" r="16"/></g>
<path vector-effect="non-scaling-stroke" d="M232,990 C238,1050 240,1090 250,1120" fill="none" stroke-width="1.6"/>
<path vector-effect="non-scaling-stroke" d="M400,290 C430,265 540,245 585,250 C602,290 612,350 602,400 C592,440 560,465 520,470 C480,475 440,450 425,430 C400,400 385,350 400,290Z" fill="#cfae98"/>
<path vector-effect="non-scaling-stroke" d="M440,420 C470,470 540,470 592,428 L586,452 C560,482 480,492 445,452Z" fill="#b5835a" stroke="none"/>
<path vector-effect="non-scaling-stroke" d="M430,335 C440,400 470,440 520,446 C570,440 602,420 607,395 C585,372 545,362 520,384 C505,395 500,420 515,436 C485,430 455,395 447,342Z" fill="#241c16" stroke="none"/>
<path vector-effect="non-scaling-stroke" d="M372,330 C380,350 395,360 405,385 M385,310 C400,330 410,345 420,370" fill="none" stroke="#2a2019" stroke-width="2"/>
<path vector-effect="non-scaling-stroke" d="M320,195 C318,120 400,84 482,88 C562,90 622,130 626,196 C560,216 440,226 332,252Z" fill="#3b3b3c"/>
<path vector-effect="non-scaling-stroke" d="M285,300 C275,260 310,242 340,236 C440,216 560,206 630,192 C672,196 672,236 636,266 C560,242 440,252 392,292 C372,330 352,360 332,360 C302,350 290,330 285,300Z" fill="#343435"/>
</g>
</g>

<g filter="url(#grain)">
<path d="M1099.2,342.8 L1111.7,347.7 L1124.1,353.2 L1136.4,359.3 L1148.6,365.9 L1160.6,373 L1172.4,380.7 L1183.9,388.9 L1195.3,397.6 L1206.4,406.8 L1217.2,416.6 L1227.8,426.8 L1238.1,437.5 L1248,448.8 L1257.6,460.4 L1266.9,472.5 L1275.8,485.1 L1284.3,498 L1292.4,511.4 L1300.1,525.1 L1307.4,539.2 L1314.3,553.7 L1320.7,568.4 L1326.6,583.5 L1332,598.8 L1337,614.4 L1341.5,630.2 L1345.4,646.2 L1348.9,662.4 L1351.8,678.7 L1354.2,695.2 L1356.1,711.8 L1357.4,728.4 L1358.2,745.1 L1358.5,761.9 L1531.2,756.1 L1530.9,742.8 L1530.3,729.5 L1529.1,716.2 L1527.6,702.9 L1525.6,689.8 L1523.2,676.7 L1520.3,663.8 L1517,651 L1513.3,638.4 L1509.2,625.9 L1504.6,613.6 L1499.7,601.5 L1494.4,589.7 L1488.7,578.1 L1482.6,566.8 L1476.1,555.7 L1469.4,545 L1462.2,534.5 L1454.8,524.4 L1447,514.6 L1439,505.1 L1430.6,496 L1422,487.3 L1413.1,478.9 L1404,471 L1394.6,463.4 L1385,456.2 L1375.3,449.5 L1365.3,443.1 L1355.1,437.2 L1344.9,431.7 L1334.4,426.7 L1323.9,422.1 L1313.2,417.9Z" fill="url(#topg)"/>
<path d="M1358.5,761.9 L1531.2,756.1 L1531.2,1141.4 L1358.5,1244.8Z" fill="#5b5044"/>
</g>
<path d="M1099.2,342.8 L1313.2,417.9 L1313.2,417.9 L1323.9,422.1 L1334.4,426.7 L1344.9,431.7 L1355.1,437.2 L1365.3,443.1 L1375.3,449.5 L1385,456.2 L1394.6,463.4 L1404,471 L1413.1,478.9 L1422,487.3 L1430.6,496 L1439,505.1 L1447,514.6 L1454.8,524.4 L1462.2,534.5 L1469.4,545 L1476.1,555.7 L1482.6,566.8 L1488.7,578.1 L1494.4,589.7 L1499.7,601.5 L1504.6,613.6 L1509.2,625.9 L1513.3,638.4 L1517,651 L1520.3,663.8 L1523.2,676.7 L1525.6,689.8 L1527.6,702.9 L1529.1,716.2 L1530.3,729.5 L1530.9,742.8 L1531.2,756.1 L1531.2,1141.4 L1358.5,1244.8" stroke="#070707" stroke-width="2" stroke-linejoin="round" stroke-linecap="round" fill="none"/>
<path d="M1358.5,761.9 L1531.2,756.1" stroke="#120d08" stroke-width="1.05" fill="none"/>
<g filter="url(#grain)">
<path d="M785.3,758.1 L1042,753.6 L1042,1096.4 L785.3,1176Z" fill="#62574a"/>
<path d="M785.3,758.1 L785.4,750.8 L785.7,743.6 L786.2,736.4 L786.9,729.2 L787.8,722 L788.9,714.9 L790.2,707.8 L791.7,700.8 L793.4,693.9 L795.3,687 L797.4,680.2 L799.6,673.5 L802.1,666.8 L804.7,660.3 L807.6,653.9 L810.6,647.6 L813.8,641.4 L817.1,635.3 L820.7,629.4 L824.4,623.6 L828.2,617.9 L832.3,612.5 L836.5,607.1 L840.8,602 L845.3,597 L849.9,592.2 L854.7,587.6 L859.6,583.1 L864.7,578.9 L869.9,574.9 L875.1,571.1 L880.5,567.5 L886.1,564.1 L891.7,560.9 L897.4,558 L903.2,555.3 L909.1,552.8 L915,550.6 L921.1,548.6 L927.2,546.9 L933.3,545.4 L939.5,544.2 L945.8,543.2 L952.1,542.5 L958.4,542.1 L964.7,541.9 L971.1,542 L977.4,542.3 L983.8,542.9 L990.1,543.8 L996.5,545 L1002.8,546.4 L1009,548.1 L1015.2,550 L1021.4,552.3 L1027.5,554.7 L1033.6,557.5 L1039.5,560.5 L1262.3,593.3 L1257.2,590.9 L1252,588.6 L1246.8,586.5 L1241.5,584.7 L1236.1,583.1 L1230.8,581.7 L1225.4,580.5 L1219.9,579.5 L1214.5,578.7 L1209,578.2 L1203.5,577.8 L1198.1,577.7 L1192.6,577.8 L1187.1,578.1 L1181.7,578.7 L1176.3,579.4 L1170.9,580.3 L1165.6,581.5 L1160.3,582.9 L1155.1,584.4 L1149.9,586.2 L1144.8,588.2 L1139.8,590.3 L1134.8,592.7 L1130,595.2 L1125.2,598 L1120.5,600.9 L1115.9,603.9 L1111.4,607.2 L1107,610.6 L1102.7,614.2 L1098.5,618 L1094.5,621.9 L1090.6,625.9 L1086.8,630.1 L1083.1,634.5 L1079.6,638.9 L1076.2,643.5 L1073,648.3 L1069.9,653.1 L1066.9,658 L1064.1,663.1 L1061.5,668.3 L1059,673.5 L1056.7,678.9 L1054.6,684.3 L1052.6,689.8 L1050.8,695.4 L1049.1,701 L1047.6,706.7 L1046.3,712.5 L1045.2,718.3 L1044.2,724.1 L1043.4,730 L1042.8,735.9 L1042.3,741.8 L1042.1,747.7 L1042,753.6Z" fill="url(#ceil)"/>
</g>
<path d="M1042,753.6 L1042.1,747.7 L1042.3,741.8 L1042.8,735.9 L1043.4,730 L1044.2,724.1 L1045.2,718.3 L1046.3,712.5 L1047.6,706.7 L1049.1,701 L1050.8,695.4 L1052.6,689.8 L1054.6,684.3 L1056.7,678.9 L1059,673.5 L1061.5,668.3 L1064.1,663.1 L1066.9,658 L1069.9,653.1 L1073,648.3 L1076.2,643.5 L1079.6,638.9 L1083.1,634.5 L1086.8,630.1 L1090.6,625.9 L1094.5,621.9 L1098.5,618 L1102.7,614.2 L1107,610.6" stroke="#070707" stroke-width="2" stroke-linejoin="round" stroke-linecap="round" fill="none"/>
<path d="M1042,753.6 L1042,1096.4 L785.3,1176" stroke="#070707" stroke-width="2" stroke-linejoin="round" stroke-linecap="round" fill="none"/>
<path d="M785.3,758.1 L1042,753.6" stroke="#120d08" stroke-width="1.05" fill="none"/>
<g filter="url(#grain)"><path d="M627,1157 L627,757 L627.2,743.1 L627.7,729.3 L628.7,715.5 L630,701.7 L631.6,688 L633.6,674.3 L636,660.8 L638.8,647.3 L641.9,633.9 L645.4,620.6 L649.2,607.5 L653.4,594.5 L657.9,581.6 L662.8,569 L668.1,556.5 L673.6,544.2 L679.6,532 L685.8,520.2 L692.4,508.5 L699.3,497.1 L706.6,485.9 L714.1,475 L722,464.4 L730.2,454 L738.6,444 L747.4,434.3 L756.5,424.9 L765.8,415.9 L775.4,407.2 L785.3,398.8 L795.4,390.9 L805.8,383.3 L816.4,376.1 L827.2,369.4 L838.3,363 L849.5,357.1 L861,351.6 L872.7,346.6 L884.5,342.1 L896.5,338 L908.6,334.4 L920.9,331.3 L933.3,328.6 L945.8,326.5 L958.4,324.9 L971.1,323.9 L983.9,323.3 L996.7,323.3 L1009.5,323.8 L1022.4,324.9 L1035.3,326.5 L1048.1,328.6 L1061,331.3 L1073.8,334.6 L1086.5,338.4 L1099.2,342.8 L1111.7,347.7 L1124.1,353.2 L1136.4,359.3 L1148.6,365.9 L1160.6,373 L1172.4,380.7 L1183.9,388.9 L1195.3,397.6 L1206.4,406.8 L1217.2,416.6 L1227.8,426.8 L1238.1,437.5 L1248,448.8 L1257.6,460.4 L1266.9,472.5 L1275.8,485.1 L1284.3,498 L1292.4,511.4 L1300.1,525.1 L1307.4,539.2 L1314.3,553.7 L1320.7,568.4 L1326.6,583.5 L1332,598.8 L1337,614.4 L1341.5,630.2 L1345.4,646.2 L1348.9,662.4 L1351.8,678.7 L1354.2,695.2 L1356.1,711.8 L1357.4,728.4 L1358.2,745.1 L1358.5,761.9 L1358.5,1244.8 L1148.6,1219.6 L1148.6,760.5 L1148.5,752.5 L1148.1,744.6 L1147.5,736.7 L1146.7,728.8 L1145.6,720.9 L1144.2,713.1 L1142.7,705.4 L1140.9,697.7 L1138.8,690.2 L1136.6,682.7 L1134.1,675.3 L1131.4,668.1 L1128.5,661 L1125.4,654 L1122,647.1 L1118.5,640.4 L1114.8,633.9 L1110.8,627.6 L1106.7,621.4 L1102.4,615.4 L1098,609.6 L1093.3,604 L1088.6,598.6 L1083.6,593.4 L1078.5,588.5 L1073.3,583.8 L1068,579.3 L1062.5,575 L1056.9,571 L1051.2,567.3 L1045.4,563.7 L1039.5,560.5 L1033.6,557.5 L1027.5,554.7 L1021.4,552.3 L1015.2,550 L1009,548.1 L1002.8,546.4 L996.5,545 L990.1,543.8 L983.8,542.9 L977.4,542.3 L971.1,542 L964.7,541.9 L958.4,542.1 L952.1,542.5 L945.8,543.2 L939.5,544.2 L933.3,545.4 L927.2,546.9 L921.1,548.6 L915,550.6 L909.1,552.8 L903.2,555.3 L897.4,558 L891.7,560.9 L886.1,564.1 L880.5,567.5 L875.1,571.1 L869.9,574.9 L864.7,578.9 L859.6,583.1 L854.7,587.6 L849.9,592.2 L845.3,597 L840.8,602 L836.5,607.1 L832.3,612.5 L828.2,617.9 L824.4,623.6 L820.7,629.4 L817.1,635.3 L813.8,641.4 L810.6,647.6 L807.6,653.9 L804.7,660.3 L802.1,666.8 L799.6,673.5 L797.4,680.2 L795.3,687 L793.4,693.9 L791.7,700.8 L790.2,707.8 L788.9,714.9 L787.8,722 L786.9,729.2 L786.2,736.4 L785.7,743.6 L785.4,750.8 L785.3,758.1 L785.3,1176Z" fill="#796d61"/></g>
<path d="M627,1157 L627,757 L627.2,743.1 L627.7,729.3 L628.7,715.5 L630,701.7 L631.6,688 L633.6,674.3 L636,660.8 L638.8,647.3 L641.9,633.9 L645.4,620.6 L649.2,607.5 L653.4,594.5 L657.9,581.6 L662.8,569 L668.1,556.5 L673.6,544.2 L679.6,532 L685.8,520.2 L692.4,508.5 L699.3,497.1 L706.6,485.9 L714.1,475 L722,464.4 L730.2,454 L738.6,444 L747.4,434.3 L756.5,424.9 L765.8,415.9 L775.4,407.2 L785.3,398.8 L795.4,390.9 L805.8,383.3 L816.4,376.1 L827.2,369.4 L838.3,363 L849.5,357.1 L861,351.6 L872.7,346.6 L884.5,342.1 L896.5,338 L908.6,334.4 L920.9,331.3 L933.3,328.6 L945.8,326.5 L958.4,324.9 L971.1,323.9 L983.9,323.3 L996.7,323.3 L1009.5,323.8 L1022.4,324.9 L1035.3,326.5 L1048.1,328.6 L1061,331.3 L1073.8,334.6 L1086.5,338.4 L1099.2,342.8 L1111.7,347.7 L1124.1,353.2 L1136.4,359.3 L1148.6,365.9 L1160.6,373 L1172.4,380.7 L1183.9,388.9 L1195.3,397.6 L1206.4,406.8 L1217.2,416.6 L1227.8,426.8 L1238.1,437.5 L1248,448.8 L1257.6,460.4 L1266.9,472.5 L1275.8,485.1 L1284.3,498 L1292.4,511.4 L1300.1,525.1 L1307.4,539.2 L1314.3,553.7 L1320.7,568.4 L1326.6,583.5 L1332,598.8 L1337,614.4 L1341.5,630.2 L1345.4,646.2 L1348.9,662.4 L1351.8,678.7 L1354.2,695.2 L1356.1,711.8 L1357.4,728.4 L1358.2,745.1 L1358.5,761.9 L1358.5,1244.8 L1148.6,1219.6 L1148.6,760.5 L1148.5,752.5 L1148.1,744.6 L1147.5,736.7 L1146.7,728.8 L1145.6,720.9 L1144.2,713.1 L1142.7,705.4 L1140.9,697.7 L1138.8,690.2 L1136.6,682.7 L1134.1,675.3 L1131.4,668.1 L1128.5,661 L1125.4,654 L1122,647.1 L1118.5,640.4 L1114.8,633.9 L1110.8,627.6 L1106.7,621.4 L1102.4,615.4 L1098,609.6 L1093.3,604 L1088.6,598.6 L1083.6,593.4 L1078.5,588.5 L1073.3,583.8 L1068,579.3 L1062.5,575 L1056.9,571 L1051.2,567.3 L1045.4,563.7 L1039.5,560.5 L1033.6,557.5 L1027.5,554.7 L1021.4,552.3 L1015.2,550 L1009,548.1 L1002.8,546.4 L996.5,545 L990.1,543.8 L983.8,542.9 L977.4,542.3 L971.1,542 L964.7,541.9 L958.4,542.1 L952.1,542.5 L945.8,543.2 L939.5,544.2 L933.3,545.4 L927.2,546.9 L921.1,548.6 L915,550.6 L909.1,552.8 L903.2,555.3 L897.4,558 L891.7,560.9 L886.1,564.1 L880.5,567.5 L875.1,571.1 L869.9,574.9 L864.7,578.9 L859.6,583.1 L854.7,587.6 L849.9,592.2 L845.3,597 L840.8,602 L836.5,607.1 L832.3,612.5 L828.2,617.9 L824.4,623.6 L820.7,629.4 L817.1,635.3 L813.8,641.4 L810.6,647.6 L807.6,653.9 L804.7,660.3 L802.1,666.8 L799.6,673.5 L797.4,680.2 L795.3,687 L793.4,693.9 L791.7,700.8 L790.2,707.8 L788.9,714.9 L787.8,722 L786.9,729.2 L786.2,736.4 L785.7,743.6 L785.4,750.8 L785.3,758.1 L785.3,1176Z" fill="url(#dots)"/>
<path d="M1099.2,342.8 L1111.7,347.7 L1124.1,353.2 L1136.4,359.3 L1148.6,365.9 L1160.6,373 L1172.4,380.7 L1183.9,388.9 L1195.3,397.6 L1206.4,406.8 L1217.2,416.6 L1227.8,426.8 L1238.1,437.5 L1248,448.8 L1257.6,460.4 L1266.9,472.5 L1275.8,485.1 L1284.3,498 L1292.4,511.4 L1300.1,525.1 L1307.4,539.2 L1314.3,553.7 L1320.7,568.4 L1326.6,583.5 L1332,598.8 L1337,614.4 L1341.5,630.2 L1345.4,646.2 L1348.9,662.4 L1351.8,678.7 L1354.2,695.2 L1356.1,711.8 L1357.4,728.4 L1358.2,745.1 L1358.5,761.9 L1358.5,1244.8" stroke="#120d08" stroke-width="1.05" fill="none"/>
<path d="M785.3,1176 L785.3,758.1 L785.4,750.8 L785.7,743.6 L786.2,736.4 L786.9,729.2 L787.8,722 L788.9,714.9 L790.2,707.8 L791.7,700.8 L793.4,693.9 L795.3,687 L797.4,680.2 L799.6,673.5 L802.1,666.8 L804.7,660.3 L807.6,653.9 L810.6,647.6 L813.8,641.4 L817.1,635.3 L820.7,629.4 L824.4,623.6 L828.2,617.9 L832.3,612.5 L836.5,607.1 L840.8,602 L845.3,597 L849.9,592.2 L854.7,587.6 L859.6,583.1 L864.7,578.9 L869.9,574.9 L875.1,571.1 L880.5,567.5 L886.1,564.1 L891.7,560.9 L897.4,558 L903.2,555.3 L909.1,552.8 L915,550.6 L921.1,548.6 L927.2,546.9 L933.3,545.4 L939.5,544.2 L945.8,543.2 L952.1,542.5 L958.4,542.1 L964.7,541.9 L971.1,542 L977.4,542.3 L983.8,542.9 L990.1,543.8 L996.5,545 L1002.8,546.4 L1009,548.1 L1015.2,550 L1021.4,552.3 L1027.5,554.7 L1033.6,557.5 L1039.5,560.5 L1045.4,563.7 L1051.2,567.3 L1056.9,571 L1062.5,575 L1068,579.3 L1073.3,583.8 L1078.5,588.5 L1083.6,593.4 L1088.6,598.6 L1093.3,604 L1098,609.6 L1102.4,615.4" stroke="#120d08" stroke-width="1.05" fill="none"/>
<path d="M627,757 L627.2,743.1 L627.7,729.3 L628.7,715.5 L630,701.7 L631.6,688 L633.6,674.3 L636,660.8 L638.8,647.3 L641.9,633.9 L645.4,620.6 L649.2,607.5 L653.4,594.5 L657.9,581.6 L662.8,569 L668.1,556.5 L673.6,544.2 L679.6,532 L685.8,520.2 L692.4,508.5 L699.3,497.1 L706.6,485.9 L714.1,475 L722,464.4 L730.2,454 L738.6,444 L747.4,434.3 L756.5,424.9 L765.8,415.9 L775.4,407.2 L785.3,398.8 L795.4,390.9 L805.8,383.3 L816.4,376.1 L827.2,369.4 L838.3,363 L849.5,357.1 L861,351.6 L872.7,346.6 L884.5,342.1 L896.5,338 L908.6,334.4 L920.9,331.3 L933.3,328.6 L945.8,326.5 L958.4,324.9 L971.1,323.9 L983.9,323.3 L996.7,323.3 L1009.5,323.8 L1022.4,324.9 L1035.3,326.5 L1048.1,328.6 L1061,331.3 L1073.8,334.6 L1086.5,338.4 L1099.2,342.8" stroke="#070707" stroke-width="2" stroke-linejoin="round" stroke-linecap="round" fill="none"/>
<path d="M1358.5,1244.8 L1148.6,1219.6 L1148.6,760.5 L1148.5,752.5 L1148.1,744.6 L1147.5,736.7 L1146.7,728.8 L1145.6,720.9 L1144.2,713.1 L1142.7,705.4 L1140.9,697.7 L1138.8,690.2 L1136.6,682.7 L1134.1,675.3 L1131.4,668.1 L1128.5,661 L1125.4,654 L1122,647.1 L1118.5,640.4 L1114.8,633.9 L1110.8,627.6 L1106.7,621.4 L1102.4,615.4" stroke="#070707" stroke-width="2" stroke-linejoin="round" stroke-linecap="round" fill="none"/>
<path d="M785.3,1176 L627,1157" stroke="#070707" stroke-width="2" stroke-linejoin="round" stroke-linecap="round" fill="none"/>
<line x1="627" y1="725.0" x2="627" y2="1157" stroke="#1414cc" stroke-width="2"/>
</svg>
<div id="status">
<div class="bx" style="left:0px;top:0px;width:2560px;height:1px;background:#e3e3ea"></div>
<svg class="i" style="left:8px;top:9px" width="16" height="16" viewBox="0 0 16 16" ><circle cx="8" cy="8" r="6.6" fill="#fafafa" stroke="#b4b4b4" stroke-width="1.1"/><path d="M8,3.8 a2.6,2.6 0 0 1 2.6,2.6 c0,1.8 -2.6,5 -2.6,5 s-2.6,-3.2 -2.6,-5 A2.6,2.6 0 0 1 8,3.8Z" fill="#a9a9a9"/><circle cx="8" cy="6.4" r="1" fill="#fafafa"/></svg>
<svg class="i" style="left:36px;top:9px" width="16" height="16" viewBox="0 0 16 16" ><circle cx="8" cy="8" r="6.6" fill="#fff" stroke="#111" stroke-width="1.3"/><circle cx="8" cy="4.9" r="1.5" fill="#111"/><path d="M5.4,7.3 h5.2 v1.6 h-1.3 v3.6 h-2.6 v-3.6 h-1.3Z" fill="#111"/></svg>
<div class="bx" style="left:64px;top:5px;width:1px;height:22px;background:#d5d5dd"></div>
<span class="t" style="left:71px;top:10.96px;font-size:13.45px;color:#2a2d38;">Click or drag to select objects. Shift = Add/Subtract. Ctrl = Add. Shift + Ctrl = Subtract.</span>
<div class="bx" style="left:2318px;top:6px;width:1px;height:21px;background:#cfcfd6"></div>
<div class="bx" style="left:2336px;top:3px;width:200px;height:27px;background:linear-gradient(#e4e4ea,#ececf1);border:1px solid #b9b9c0;border-top-color:#a6a6ad;border-left-color:#a9a9b0;border-radius:2px"></div>
<svg class="i" style="left:2546px;top:18px" width="12" height="12" viewBox="0 0 12 12" ><g fill="#c4c4cc"><rect x="9" y="1" width="1.3" height="1.3"/><rect x="6" y="4" width="1.3" height="1.3"/><rect x="9" y="4" width="1.3" height="1.3"/><rect x="3" y="7" width="1.3" height="1.3"/><rect x="6" y="7" width="1.3" height="1.3"/><rect x="9" y="7" width="1.3" height="1.3"/><rect x="0" y="10" width="1.3" height="1.3"/><rect x="3" y="10" width="1.3" height="1.3"/><rect x="6" y="10" width="1.3" height="1.3"/><rect x="9" y="10" width="1.3" height="1.3"/></g></svg>
</div>
<div id="panel"></div><div id="pin"></div>
<div class="bx" style="left:2489px;top:-2px;width:1px;height:1328px;background:#b9bac2"></div>
<div class="bx" style="left:2490px;top:-2px;width:14px;height:1328px;background:#fff"></div>
<div class="bx" style="left:2502px;top:-2px;width:1px;height:1328px;background:#cdcdd0"></div>
<div class="bx" style="left:2490px;top:-2px;width:12px;height:271px;background:#f2f2f3;border-bottom:1px solid #d9d9de"></div>
<div class="bx" style="left:2490px;top:1311px;width:12px;height:15px;border-top:1px solid #d5d5da;border-bottom:1px solid #c4c5cc;background:#fdfdfe"></div>
<svg class="i" style="left:2490px;top:1311px" width="12" height="15" viewBox="0 0 12 15" ><path d="M2.4,5.8 H9.6 L6,9.6Z" fill="#8a8a90"/></svg>
<div class="bx" style="left:1907px;top:1320px;width:582px;height:5px;border:1px solid #dfe1ea;border-right:none;background:#f4f6fb"></div>
<div class="hdr" style="top:-18px;height:26px"><svg class="i" style="left:6px;top:7.5px" width="14" height="14"><path d="M1,2 L7,8.4 L13,2" fill="none" stroke="#555866" stroke-width="1.3"/></svg><div class="cl" style="top:3px"><svg width="18" height="18"><path d="M5,5 L13,13 M13,5 L5,13" stroke="#5a5d68" stroke-width="1.1"/></svg></div></div><span class="t" style="left:1932px;top:-9.96px;font-size:12.3px;color:#3b3e4b;letter-spacing:-0.245px;">Tags</span>
<svg class="i" style="left:1915px;top:10px" width="70" height="30" viewBox="1915 10 70 30" ><circle cx="1929.1" cy="24.9" r="6.3" fill="none" stroke="#3f4250" stroke-width="1.2"/><path d="M1925.5,24.9 H1932.6999999999998 M1929.1,21.299999999999997 V28.5" stroke="#3f4250" stroke-width="1.5"/><path d="M1967.8,30.4 H1960.2 V18.4 H1966.8 L1968.8,20.4 H1975.8 V24.6" fill="none" stroke="#2b2e3a" stroke-width="1.4" stroke-linejoin="round"/><circle cx="1973.4" cy="29.3" r="4.4" fill="#f4f7fc" stroke="#2b2e3a" stroke-width="1.2"/><path d="M1970.8,29.3 H1976 M1973.4,26.7 V31.9" stroke="#2b2e3a" stroke-width="1.2"/></svg>
<div class="inp" style="left:1989px;top:12px;width:378px;height:25px;"></div>
<span class="t" style="left:1993px;top:19.04px;font-size:12.3px;color:#b4bccb;letter-spacing:-0.329px;">Search</span>
<svg class="i" style="left:2376px;top:14px" width="100" height="22" viewBox="2376 14 100 22" ><path d="M2389.4,17 L2395,23.4 L2387,31.4 L2381.4,29.6 L2381,25.2Z" fill="none" stroke="#777a84" stroke-width="1.1" stroke-linejoin="round"/><path d="M2384.8,27.2 L2379.2,32.8" stroke="#777a84" stroke-width="1.1"/><circle cx="2384.3" cy="27.7" r="1.1" fill="none" stroke="#777a84" stroke-width=".9"/><path d="M2427.3,16.4 L2432,17.3 L2433,21.8 L2425,30 L2419.8,22.6Z" fill="#f4f7fc" stroke="#33363f" stroke-width="1.1" stroke-linejoin="round"/><circle cx="2429.3" cy="19" r="1" fill="none" stroke="#33363f" stroke-width=".9"/><path d="M2433,21.8 L2434.8,23.2 V27.6 L2427.3,33.3 L2424.2,30.6" fill="none" stroke="#33363f" stroke-width="1.1" stroke-linejoin="round"/><path d="M2434.8,27.6 L2434.8,25.4 L2426.6,31.6" fill="none" stroke="#33363f" stroke-width="1"/><!--ARROW--></svg>
<svg class="i" style="left:2460px;top:17px" width="15" height="16" viewBox="0 0 15 16" ><path d="M0.4,3.6 H6 V0.4 L14.2,7.8 L6,15.2 V12 H0.4Z" fill="#000"/><rect x="1.2" y="4.2" width="6.6" height="7.4" fill="#fff"/><rect x="1.2" y="4.2" width="6.6" height="2.4" fill="#2f7be0"/><path d="M2.2,8.2 H6.8 M2.2,10 H6.8" stroke="#8a8f9c" stroke-width=".8"/></svg>
<div class="bx" style="left:1909px;top:42px;width:578px;height:125px;background:#fff"></div>
<div class="bx" style="left:1909px;top:62px;width:578px;height:1px;background:#dcdee8"></div>
<div class="bx" style="left:1938px;top:42px;width:1px;height:20px;background:#e2e4ec"></div>
<div class="bx" style="left:2366px;top:42px;width:1px;height:20px;background:#e2e4ec"></div>
<div class="bx" style="left:2396px;top:42px;width:1px;height:20px;background:#e2e4ec"></div>
<div class="bx" style="left:2456px;top:42px;width:1px;height:20px;background:#e2e4ec"></div>
<div class="bx" style="left:2486px;top:42px;width:1px;height:20px;background:#e2e4ec"></div>
<span class="t" style="left:1959.6px;top:47.04px;font-size:12.3px;color:#1c2233;letter-spacing:-0.078px;">Name</span>
<svg class="i" style="left:2352px;top:50px" width="10" height="7" viewBox="0 0 10 7" ><path d="M1,1 L5,5 L9,1" fill="none" stroke="#222" stroke-width="1.3"/></svg>
<span class="t" style="left:2399.7px;top:47.04px;font-size:12.3px;color:#1c2233;letter-spacing:-0.234px;">Dashes</span>
<svg class="i" style="left:1916px;top:66px" width="15" height="11" viewBox="0 0 15 11" ><path d="M.8,5.8 C3.2,1.1 11.2,1.1 13.6,5.8 C11.2,10.3 3.2,10.3 .8,5.8Z" fill="#fff" stroke="#000" stroke-width="1.1"/><circle cx="7.2" cy="4.9" r="2.8" fill="#000"/><circle cx="6.5" cy="3.9" r=".8" fill="#fff"/></svg>
<span class="t" style="left:1959.6px;top:65.14px;font-size:12.3px;color:#1c2233;letter-spacing:-0.043px;">Untagged</span>
<span class="t" style="left:2399.7px;top:65.14px;font-size:12.3px;color:#1c2233;letter-spacing:0.190px;">Default</span>
<svg class="i" style="left:2464px;top:63px" width="15" height="15" viewBox="0 0 15 15" ><path d="M11.8,1 L14,3.2 L4.6,12.6 L2.4,10.4Z" fill="#d22" stroke="#7a1010" stroke-width=".6"/><path d="M2.4,10.4 L4.6,12.6 L.8,14.2Z" fill="#c9a27a" stroke="#6b5a45" stroke-width=".5"/><path d="M12.6,.8 L14.2,2.4" stroke="#777" stroke-width="1.2"/></svg>
<div class="bx" style="left:1907px;top:181px;width:582px;height:1px;background:#e3e5ee"></div>
<div class="bx" style="left:1907px;top:184px;width:582px;height:1px;background:#e3e5ee"></div>
<div class="hdr" style="top:186px;height:26px"><svg class="i" style="left:6px;top:7.5px" width="14" height="14"><path d="M1,2 L7,8.4 L13,2" fill="none" stroke="#555866" stroke-width="1.3"/></svg><div class="cl" style="top:3px"><svg width="18" height="18"><path d="M5,5 L13,13 M13,5 L5,13" stroke="#5a5d68" stroke-width="1.1"/></svg></div></div><span class="t" style="left:1932px;top:194.04px;font-size:12.3px;color:#3b3e4b;letter-spacing:-0.143px;">Shadows</span>
<svg class="i" style="left:1921px;top:227px" width="18" height="18" viewBox="0 0 18 18" ><path d="M1.5,4.9 L8,1.5 L12.8,9.3 L5.9,13Z" fill="#fff" stroke="#0c3a66" stroke-width="1.1" stroke-linejoin="round"/><path d="M5.9,13 L12.8,9.3 L16.3,11.8 L9.6,15.9Z" fill="#0c3a66"/><path d="M3.7,9 L10.6,5.4" stroke="#0c3a66" stroke-width=".8"/></svg>
<div class="inp" style="left:1947px;top:223px;width:89px;height:25px;"></div>
<span class="t" style="left:1952.3px;top:230.14px;font-size:12.3px;color:#1c2233;letter-spacing:-0.406px;">UTC-07:00</span>
<svg class="i" style="left:2019px;top:232px" width="10" height="7" viewBox="0 0 10 7" ><path d="M1,1.4 H9 L5,5.8Z" fill="#6d6f78"/></svg>
<svg class="i" style="left:2462px;top:228px" width="12" height="17" viewBox="0 0 12 17" ><rect x=".8" y=".4" width="10.4" height="8" fill="#000"/><rect x="3.2" y="3.6" width="5.6" height="1.6" fill="#fff"/><rect x="1.2" y="9.4" width="9.6" height="6.6" fill="#fff" stroke="#bbb" stroke-width=".6"/><path d="M2.4,14.8 H9.6 L6,10.6Z" fill="#000"/></svg>
<span class="t" style="left:1916px;top:256.84px;font-size:12.3px;color:#1c2233;letter-spacing:0.031px;">Time</span>
<div class="bx" style="left:1959px;top:257.5px;width:426.5px;height:6px;background:linear-gradient(90deg,#ffffff 0%,#d9e5ef 14%,#a9c8e2 30%,#8aa9d8 48%,#6b7fe8 62%,#5a62ee 70%,#3b43b8 80%,#1c1f5c 90%,#000 100%);border-radius:3px 0 0 3px;box-shadow:inset 0 0 0 1px rgba(90,90,100,.45)"></div><div class="bx" style="left:2243px;top:255.5px;width:7.5px;height:11.5px;background:linear-gradient(#fff,#e9e9ee);border:1px solid #a9a9b1;border-radius:2px"></div>
<span class="t" style="left:1959.4px;top:266.91px;font-size:10.8px;color:#1c2233;letter-spacing:-0.004px;">06:43 AM</span>
<span class="t" style="left:2159.8px;top:266.91px;font-size:10.8px;color:#1c2233;letter-spacing:-0.080px;">Noon</span>
<span class="t" style="left:2339.4px;top:266.91px;font-size:10.8px;color:#1c2233;letter-spacing:-0.004px;">04:45 PM</span>
<div class="inp" style="left:2401px;top:255.5px;width:79px;height:23.5px;"></div>
<div class="bx" style="left:2464.5px;top:256.5px;width:1px;height:21.5px;background:#c4c4ca"></div>
<span class="t" style="left:2406.3px;top:261.44px;font-size:12.3px;color:#1c2233;letter-spacing:0.002px;">01:30 pm</span>
<svg class="i" style="left:2467.8px;top:260.2px" width="9" height="15" viewBox="0 0 9 15" ><path d="M1,4.4 L4.5,1 L8,4.4Z M1,10.4 L4.5,13.8 L8,10.4Z" fill="#8d8f97"/></svg>
<span class="t" style="left:1916px;top:285.94px;font-size:12.3px;color:#1c2233;letter-spacing:0.005px;">Date</span>
<div class="bx" style="left:1958px;top:286.5px;width:427.5px;height:6px;background:linear-gradient(90deg,#ffffff 0%,#fdeab4 12%,#f9cf52 26%,#f5b716 36%,#f58a0c 46%,#f6500a 56%,#f91408 66%,#fb4040 76%,#fb8d8d 86%,#fde0e0 96%,#fff 100%);border-radius:3px;box-shadow:inset 0 0 0 1px rgba(90,90,100,.45)"></div><div class="bx" style="left:2317.6px;top:284.4px;width:7.5px;height:11.5px;background:linear-gradient(#fff,#e9e9ee);border:1px solid #a9a9b1;border-radius:2px"></div>
<span class="t" style="left:1973.3px;top:295.71px;font-size:10.8px;color:#1c2233;">J</span>
<span class="t" style="left:2008.4px;top:295.71px;font-size:10.8px;color:#1c2233;">F</span>
<span class="t" style="left:2042.9px;top:295.71px;font-size:10.8px;color:#1c2233;">M</span>
<span class="t" style="left:2079.4px;top:295.71px;font-size:10.8px;color:#1c2233;">A</span>
<span class="t" style="left:2114.2px;top:295.71px;font-size:10.8px;color:#1c2233;">M</span>
<span class="t" style="left:2151.7px;top:295.71px;font-size:10.8px;color:#1c2233;">J</span>
<span class="t" style="left:2187.4px;top:295.71px;font-size:10.8px;color:#1c2233;">J</span>
<span class="t" style="left:2222.2px;top:295.71px;font-size:10.8px;color:#1c2233;">A</span>
<span class="t" style="left:2257.8px;top:295.71px;font-size:10.8px;color:#1c2233;">S</span>
<span class="t" style="left:2292.9px;top:295.71px;font-size:10.8px;color:#1c2233;">O</span>
<span class="t" style="left:2328.9px;top:295.71px;font-size:10.8px;color:#1c2233;">N</span>
<span class="t" style="left:2364.6px;top:295.71px;font-size:10.8px;color:#1c2233;">D</span>
<div class="inp" style="left:2401px;top:283.5px;width:79px;height:25.5px;"></div>
<div class="bx" style="left:2459.5px;top:284.5px;width:1px;height:23.5px;background:#c4c4ca"></div>
<span class="t" style="left:2405.6px;top:288.94px;font-size:12.3px;color:#1c2233;letter-spacing:0.326px;">11/08</span>
<svg class="i" style="left:2464px;top:293px" width="10" height="7" viewBox="0 0 10 7" ><path d="M1,1.2 H8.6 L4.8,5.4Z" fill="#6d6f78"/></svg>
<div class="hl" style="left:1916px;top:312px;width:564px;height:2px;"></div>
<span class="t" style="left:1916px;top:325.44px;font-size:12.3px;color:#1c2233;letter-spacing:0.065px;">Light</span>
<div class="bx" style="left:1959px;top:320.5px;width:426.5px;height:6px;background:linear-gradient(90deg,#000 0%,#3a3a3a 25%,#7d7d7d 50%,#bdbdbd 75%,#fdfdfd 100%);border-radius:3px;box-shadow:inset 0 0 0 1px rgba(90,90,100,.45)"></div><div class="bx" style="left:2295.2px;top:318.4px;width:7.5px;height:11.5px;background:linear-gradient(#fff,#e9e9ee);border:1px solid #a9a9b1;border-radius:2px"></div>
<div class="inp" style="left:2401px;top:318px;width:79px;height:24px;border-color:#4b4d57;border-width:1.4px"></div>
<div class="bx" style="left:2464.5px;top:319px;width:1.4px;height:22px;background:#4b4d57"></div>
<span class="t" style="left:2406.3px;top:324.84px;font-size:12.3px;color:#1c2233;letter-spacing:-0.141px;">80</span>
<svg class="i" style="left:2467.8px;top:323px" width="9" height="15" viewBox="0 0 9 15" ><path d="M1,4.4 L4.5,1 L8,4.4Z M1,10.4 L4.5,13.8 L8,10.4Z" fill="#8d8f97"/></svg>
<span class="t" style="left:1916px;top:356.84px;font-size:12.3px;color:#1c2233;letter-spacing:0.132px;">Dark</span>
<div class="bx" style="left:1958px;top:352.5px;width:427.5px;height:6px;background:linear-gradient(90deg,#000 0%,#3a3a3a 25%,#7d7d7d 50%,#bdbdbd 75%,#fdfdfd 100%);border-radius:3px;box-shadow:inset 0 0 0 1px rgba(90,90,100,.45)"></div><div class="bx" style="left:2146.8px;top:350.3px;width:7.5px;height:11.5px;background:linear-gradient(#fff,#e9e9ee);border:1px solid #a9a9b1;border-radius:2px"></div>
<div class="inp" style="left:2401px;top:350px;width:79px;height:24px;border-color:#4b4d57;border-width:1.4px"></div>
<div class="bx" style="left:2464.5px;top:351px;width:1.4px;height:22px;background:#4b4d57"></div>
<span class="t" style="left:2406.3px;top:356.74px;font-size:12.3px;color:#1c2233;letter-spacing:-0.141px;">45</span>
<svg class="i" style="left:2467.8px;top:355px" width="9" height="15" viewBox="0 0 9 15" ><path d="M1,4.4 L4.5,1 L8,4.4Z M1,10.4 L4.5,13.8 L8,10.4Z" fill="#8d8f97"/></svg>
<div class="hl" style="left:1916px;top:382px;width:564px;height:2px;"></div>
<div class="cb" style="left:1956px;top:393px;width:14px;height:14px;"></div>
<span class="t" style="left:1975.3px;top:395.14px;font-size:12.3px;color:#1c2233;letter-spacing:0.058px;">Use sun for shading</span>
<div class="hl" style="left:1916px;top:417px;width:564px;height:2px;"></div>
<span class="t" style="left:1916px;top:428.34px;font-size:12.3px;color:#1c2233;letter-spacing:-0.118px;">Display:</span>
<div class="cb d" style="left:1956px;top:452.5px;width:14px;height:14px;"><svg width="12" height="12" style="position:absolute;left:0;top:0"><path d="M2.4,6 L5,9.6 L9.8,2" fill="none" stroke="#7c7e88" stroke-width="1.5"/></svg></div>
<span class="t" style="left:1975.3px;top:453.74px;font-size:12.3px;color:#b3b5c0;letter-spacing:-0.153px;">On faces</span>
<div class="cb d" style="left:1956px;top:476px;width:14px;height:14px;"><svg width="12" height="12" style="position:absolute;left:0;top:0"><path d="M2.4,6 L5,9.6 L9.8,2" fill="none" stroke="#7c7e88" stroke-width="1.5"/></svg></div>
<span class="t" style="left:1975.3px;top:477.64px;font-size:12.3px;color:#b3b5c0;letter-spacing:0.153px;">On ground</span>
<div class="cb d" style="left:1956px;top:500px;width:14px;height:14px;"></div>
<span class="t" style="left:1975.3px;top:501.74px;font-size:12.3px;color:#b3b5c0;letter-spacing:-0.063px;">From edges</span>
<div class="hdr" style="top:529px;height:26px"><svg class="i" style="left:6px;top:7.5px" width="14" height="14"><path d="M1,2 L7,8.4 L13,2" fill="none" stroke="#555866" stroke-width="1.3"/></svg><div class="cl" style="top:3px"><svg width="18" height="18"><path d="M5,5 L13,13 M13,5 L5,13" stroke="#5a5d68" stroke-width="1.1"/></svg></div></div><span class="t" style="left:1932px;top:537.04px;font-size:12.3px;color:#3b3e4b;letter-spacing:-0.471px;">Scenes</span>
<svg class="i" style="left:1910px;top:558px" width="70" height="18" viewBox="1910 558 70 18" ><g fill="none" stroke="#54565f" stroke-width="1.7"><path d="M1913.6,565.4 A5.8,5.8 0 0 1 1923.6,563"/><path d="M1924.6,568.8 A5.8,5.8 0 0 1 1914.6,571.2"/></g><path d="M1925.4,560.2 V565.2 H1920.4Z M1912.8,574 V569 H1917.8Z" fill="#54565f"/><circle cx="1944.4" cy="567" r="6.6" fill="none" stroke="#000" stroke-width="1.6"/><path d="M1940.5,567 H1948.3000000000002 M1944.4,563.1 V570.9" stroke="#000" stroke-width="2.1"/><circle cx="1969" cy="567" r="6.6" fill="none" stroke="#4a4c55" stroke-width="1.2"/><path d="M1964.8,567 H1973.2" stroke="#4a4c55" stroke-width="1.4"/></svg>
<svg class="i" style="left:2364px;top:558px" width="70" height="20" viewBox="2364 558 70 20" ><g fill="none" stroke="#5b5d66" stroke-width="2.1"><path d="M2373.8,562 C2370.6,561.4 2370.2,563 2370.2,565 V569.6"/><path d="M2392,572.8 C2395.4,573.4 2395.8,571.8 2395.8,569.8 V565"/></g><path d="M2366.8,568.8 H2373.6 L2370.2,573.6Z M2392.4,565.6 H2399.2 L2395.8,560.8Z" fill="#5b5d66"/><g fill="none" stroke="#111" stroke-width="1.2"><rect x="2412.4" y="563.6" width="3.4" height="3.4"/><rect x="2412.4" y="571" width="3.4" height="3.4"/></g><path d="M2417.8,563.6 H2423.4 M2417.8,565.4 H2422.4 M2417.8,567.2 H2421.2 M2417.8,571 H2423.4 M2417.8,572.8 H2422.4 M2417.8,574.6 H2421.2" stroke="#333" stroke-width="1"/><path d="M2426.6,568.4 H2430.4 L2428.5,570.6Z" fill="#111"/></svg>
<svg class="i" style="left:2440px;top:559.2px" width="11" height="16" viewBox="0 0 11 16" ><rect x=".4" y=".4" width="9.8" height="7" fill="#fff" stroke="#c9c9cf" stroke-width=".6"/><path d="M1.6,1.8 H9 L5.3,5.8Z" fill="#000"/><rect x=".2" y="7" width="10.2" height="8.6" fill="#000"/><path d="M2.6,11.4 H8 M5.3,8.8 V14" stroke="#fff" stroke-width="1.6"/></svg>
<svg class="i" style="left:2463px;top:559.4px" width="15" height="16" viewBox="0 0 15 16" ><path d="M0.4,3.6 H6 V0.4 L14.2,7.8 L6,15.2 V12 H0.4Z" fill="#000"/><rect x="1.2" y="4.2" width="6.6" height="7.4" fill="#fff"/><rect x="1.2" y="4.2" width="6.6" height="2.4" fill="#2f7be0"/><path d="M2.2,8.2 H6.8 M2.2,10 H6.8" stroke="#8a8f9c" stroke-width=".8"/></svg>
<div class="bx" style="left:1907px;top:580px;width:583px;height:192px;background:#fff;border:1px solid #9fa0a8"></div>
<div class="bx" style="left:1907px;top:776px;width:582px;height:1px;background:#e6e8f0"></div>
<div class="hdr" style="top:778px;height:26px"><svg class="i" style="left:7px;top:6px" width="14" height="14"><path d="M2,1.2 L8,7.2 L2,13.2" fill="none" stroke="#555866" stroke-width="1.3"/></svg><div class="cl" style="top:3px"><svg width="18" height="18"><path d="M5,5 L13,13 M13,5 L5,13" stroke="#5a5d68" stroke-width="1.1"/></svg></div></div><span class="t" style="left:1932px;top:786.04px;font-size:12.3px;color:#3b3e4b;letter-spacing:0.333px;">Instructor</span>
<div class="hdr" style="top:805px;height:26px"><svg class="i" style="left:6px;top:7.5px" width="14" height="14"><path d="M1,2 L7,8.4 L13,2" fill="none" stroke="#555866" stroke-width="1.3"/></svg><div class="cl" style="top:3px"><svg width="18" height="18"><path d="M5,5 L13,13 M13,5 L5,13" stroke="#5a5d68" stroke-width="1.1"/></svg></div></div><span class="t" style="left:1932px;top:813.04px;font-size:12.3px;color:#3b3e4b;letter-spacing:0.111px;">Materials</span>
<svg class="i" style="left:2048.75px;top:849.75px" width="299.4" height="149" viewBox="2048.75 849.75 299.4 149"><defs><filter id="cg" x="0" y="0" width="100%" height="100%" color-interpolation-filters="sRGB"><feTurbulence type="fractalNoise" baseFrequency="0.55" numOctaves="2" seed="4" result="n"/><feColorMatrix in="n" type="matrix" values="0 0 0 0 1  0 0 0 0 1  0 0 0 0 1  .42 0 0 0 -.17" result="w"/><feTurbulence type="fractalNoise" baseFrequency="0.09" numOctaves="2" seed="9" result="n2"/><feColorMatrix in="n2" type="matrix" values="0 0 0 0 0  0 0 0 0 0  0 0 0 0 0  .22 0 0 0 -.08" result="k"/><feMerge result="m"><feMergeNode in="w"/><feMergeNode in="k"/></feMerge><feComposite in="m" in2="SourceAlpha" operator="in" result="mc"/><feMerge><feMergeNode in="SourceGraphic"/><feMergeNode in="mc"/></feMerge></filter></defs><rect x="2048.75" y="849.75" width="299.4" height="149" fill="#464646"/><g filter="url(#cg)"><path d="M2199,854.8 L2263.8,885 L2200.2,929 L2134.4,885.6Z" fill="#9a8c7b"/><path d="M2134.4,885.6 L2200.2,929 L2199.8,994 L2146,950Z" fill="#786c5d"/><path d="M2200.2,929 L2263.8,885 L2254,948.8 L2199.8,994Z" fill="#72675a"/></g><path d="M2199,854.8 L2263.8,885 L2254,948.8 L2199.8,994 L2146,950 L2134.4,885.6Z M2134.4,885.6 L2200.2,929 L2263.8,885 M2200.2,929 L2199.8,994" fill="none" stroke="#111" stroke-width=".9" stroke-linejoin="round"/><rect x="2303" y="954.4" width="29.5" height="29" rx="3" fill="#fcfcfe"/><g fill="#0c3a66"><path d="M2317.8,966.2 L2319.2,971.6 L2324.8,973.1 L2319.2,974.6 L2317.8,980.2 L2316.4,974.6 L2310.8,973.1 L2316.4,971.6Z"/><path d="M2310.4,962 L2311.1,964.7 L2313.8,965.4 L2311.1,966.1 L2310.4,968.8 L2309.7,966.1 L2307,965.4 L2309.7,964.7Z"/><path d="M2316.5,956.9 L2317,958.7 L2318.8,959.2 L2317,959.7 L2316.5,961.5 L2316,959.7 L2314.2,959.2 L2316,958.7Z"/></g></svg>
<span class="t" style="left:1927.5px;top:1011.94px;font-size:12.3px;color:#3a3d4a;letter-spacing:-0.078px;">Name</span>
<div class="inp" style="left:1971px;top:1005px;width:464px;height:25px;"></div>
<span class="t" style="left:1974.4px;top:1011.94px;font-size:12.3px;color:#1c2233;letter-spacing:-0.386px;">Gravel_01_1K</span>
<svg class="i" style="left:2448px;top:1008px" width="18" height="18" viewBox="0 0 18 18" ><g fill="#e3edf8" stroke="#7ba3cf" stroke-width="1"><path d="M1.6,3 Q1.6,1.4 3.2,1.4 H6.6 L9,3.8 V10 Q9,11.4 7.4,11.4 H3.2 Q1.6,11.4 1.6,10Z"/><path d="M8.4,7.6 Q8.4,6 10,6 H13.4 L15.8,8.4 V14.8 Q15.8,16.2 14.2,16.2 H10 Q8.4,16.2 8.4,14.8Z"/></g><path d="M3.4,4.8 H7 M3.4,6.6 H7 M3.4,8.4 H7 M10.2,10 H14 M10.2,11.8 H14 M10.2,13.6 H14" stroke="#a9c3e0" stroke-width=".8"/></svg>
<div class="hl" style="left:1916px;top:1045px;width:564px;height:2px;"></div>
<div class="bx" style="left:1974px;top:1084px;width:506px;height:1px;background:#c9cbd4"></div>
<div class="bx" style="left:1916px;top:1057px;width:59px;height:28px;background:#f4f7fc;border:1px solid #dfe2ea;border-bottom:none;border-radius:3px 3px 0 0"></div>
<div class="bx" style="left:1974px;top:1059px;width:46px;height:26px;background:#fff;border:1px solid #e1e3ea;border-bottom:1px solid #c9cbd4;border-radius:3px 3px 0 0"></div>
<span class="t" style="left:1928.5px;top:1066.04px;font-size:12.3px;color:#3b3e4b;letter-spacing:-0.231px;">Select</span>
<span class="t" style="left:1986.5px;top:1066.74px;font-size:12.3px;color:#3b3e4b;letter-spacing:-0.049px;">Edit</span>
<svg class="i" style="left:2433px;top:1059px" width="20" height="20" viewBox="0 0 20 20" ><path d="M3,17.2 L4.2,14 L11,7.2 L13,9.2 L6.2,16Z" fill="#d9dbe0" stroke="#4a4a4a" stroke-width=".8"/><path d="M3,17.2 L4.2,14 L6.6,11.6 L8.6,13.6 L6.2,16Z" fill="#e6a817" stroke="#8a6a10" stroke-width=".6"/><path d="M10.2,6.4 L13.8,10" stroke="#333" stroke-width="2.2" stroke-linecap="round"/><ellipse cx="14.6" cy="5.2" rx="3.4" ry="2.5" transform="rotate(-45 14.6 5.2)" fill="#4a4442"/></svg>
<svg class="i" style="left:2462.8px;top:1061.2px" width="11" height="16" viewBox="0 0 11 16" ><rect x=".4" y=".4" width="9.8" height="7" fill="#fff" stroke="#c9c9cf" stroke-width=".6"/><path d="M1.6,1.8 H9 L5.3,5.8Z" fill="#000"/><rect x=".2" y="7" width="10.2" height="8.6" fill="#000"/><path d="M2.6,11.4 H8 M5.3,8.8 V14" stroke="#fff" stroke-width="1.6"/></svg>
<svg class="i" style="left:1918px;top:1088px" width="72" height="20" viewBox="1918 1088 72 20" ><circle cx="1928.5" cy="1098.5" r="6.6" fill="none" stroke="#000" stroke-width="1.6"/><path d="M1924.6,1098.5 H1932.4 M1928.5,1094.6 V1102.4" stroke="#000" stroke-width="2.1"/><g fill="none" stroke="#333" stroke-width="1.2" stroke-linejoin="round"><path d="M1947.6,1092.4 L1953,1089.8 L1958.4,1092.4 M1945.6,1094.2 V1101.4 L1953,1105.8 L1960.4,1101.4 V1094.2"/><path d="M1953,1092.8 L1957.6,1095.4 V1100.4 L1953,1103 L1948.4,1100.4 V1095.4Z"/></g><g fill="#333"><circle cx="1953" cy="1096" r=".8"/><circle cx="1951.2" cy="1098.8" r=".8"/><circle cx="1954.8" cy="1098.8" r=".8"/></g><path d="M1970.8,1098.8 L1978.1,1091.4 L1985.6,1098.8" fill="none" stroke="#000" stroke-width="1.7" stroke-linejoin="miter"/><path d="M1973,1098 V1105.4 H1983.4 V1098" fill="none" stroke="#000" stroke-width="1.7"/><rect x="1976.2" y="1099.6" width="4.2" height="5.8" fill="#000"/></svg>
<div class="inp" style="left:1991px;top:1086.5px;width:464px;height:24px;background:linear-gradient(#fff,#f6f7fa)"></div>
<span class="t" style="left:1996.3px;top:1092.94px;font-size:12.3px;color:#1c2233;letter-spacing:0.145px;">Ground</span>
<svg class="i" style="left:2439px;top:1095px" width="10" height="7" viewBox="0 0 10 7" ><path d="M1,1.4 H8 L4.5,5.2Z" fill="#8a8c94"/></svg>
<svg class="i" style="left:2461px;top:1090.2px" width="15" height="16" viewBox="0 0 15 16" ><path d="M0.4,3.6 H6 V0.4 L14.2,7.8 L6,15.2 V12 H0.4Z" fill="#000"/><rect x="1.2" y="4.2" width="6.6" height="7.4" fill="#fff"/><rect x="1.2" y="4.2" width="6.6" height="2.4" fill="#2f7be0"/><path d="M2.2,8.2 H6.8 M2.2,10 H6.8" stroke="#8a8f9c" stroke-width=".8"/></svg>
<div class="bx" style="left:1916px;top:1112px;width:564px;height:199px;background:#fff;border:1px solid #a3a4ac"></div>
<span class="t" style="left:1920.2px;top:1115.94px;font-size:12.3px;color:#1c2233;letter-spacing:-0.285px;">Forest_Floor_01_1K</span>
<span class="t" style="left:1920.2px;top:1132.96px;font-size:12.3px;color:#1c2233;letter-spacing:-0.386px;">Gravel_01_1K</span>
<span class="t" style="left:1920.2px;top:1149.98px;font-size:12.3px;color:#1c2233;letter-spacing:-0.492px;">Soil_03_1K</span>
<span class="t" style="left:1920.2px;top:1167.00px;font-size:12.3px;color:#1c2233;letter-spacing:-0.492px;">Soil_04_1K</span>
<span class="t" style="left:1920.2px;top:1184.02px;font-size:12.3px;color:#1c2233;letter-spacing:-0.492px;">Soil_13_1K</span>
<span class="t" style="left:1920.2px;top:1201.04px;font-size:12.3px;color:#1c2233;letter-spacing:-0.319px;">Wood_Chips_01_1K</span>
</body>
</html>
